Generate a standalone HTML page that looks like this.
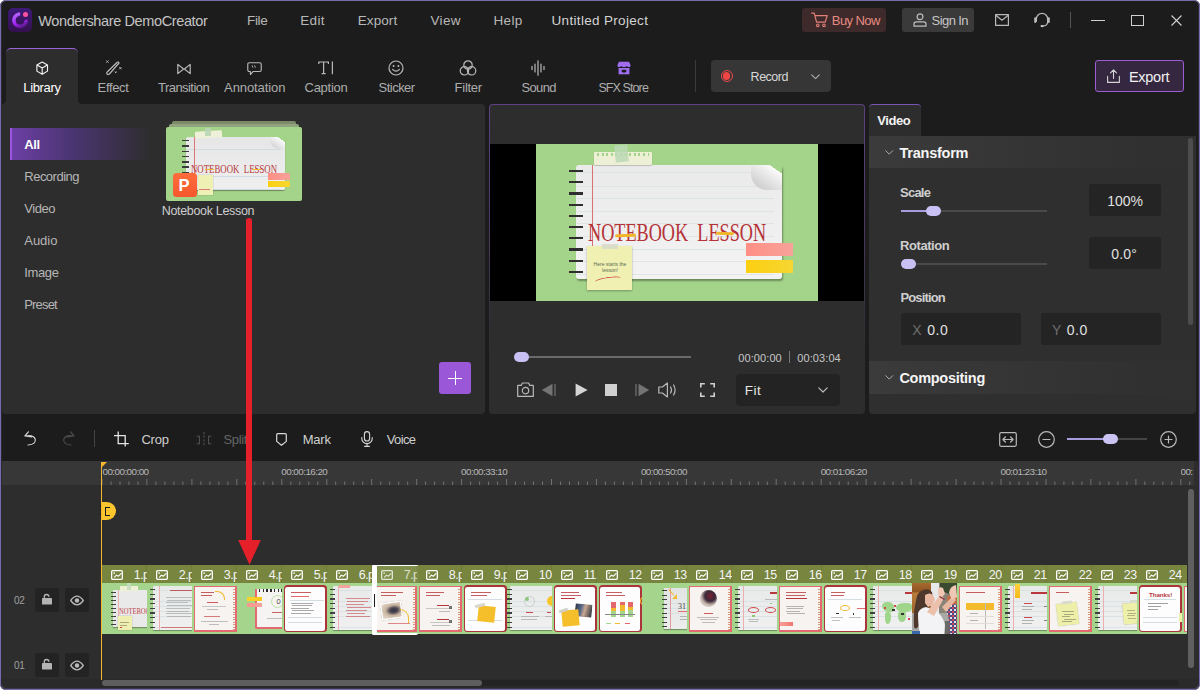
<!DOCTYPE html>
<html lang="en"><head><meta charset="utf-8"><title>Wondershare DemoCreator</title>
<style>
html,body{margin:0;padding:0}
body{width:1200px;height:690px;overflow:hidden;background:#fff;font-family:"Liberation Sans",sans-serif;color:#cfcfcf;font-size:13px;position:relative}
#win{position:absolute;left:0;top:0;width:1200px;height:690px;background:#1c1c1c;border-radius:6px;overflow:hidden}
#frame{position:absolute;left:0;top:0;width:1200px;height:690px;border:1px solid #776ba8;border-radius:6px;box-sizing:border-box;pointer-events:none;z-index:50;box-shadow:inset 0 -0.5px 0 0.5px rgba(119,107,168,.35)}
.a{position:absolute}
.t{position:absolute;white-space:nowrap;line-height:1}
.panel{position:absolute;background:#2d2d2d}
svg{position:absolute;overflow:visible}
.menu{color:#b8b8b8;font-size:13.5px}
.tl{color:#adadad;font-size:13px}
.ic{stroke:#b9b9b9;fill:none;stroke-width:1.2;stroke-linecap:round;stroke-linejoin:round}
.nav{position:absolute;left:25px;color:#b6b6b6;font-size:13px;line-height:14px}
.box{position:absolute;background:#242424;border-radius:3px}
.lab{position:absolute;color:#cecece;font-size:13px;font-weight:bold;line-height:14px}
</style></head>
<body>
<div id="win">
<!-- title bar -->
<svg class="a" style="left:8px;top:8px" width="24" height="24" viewBox="0 0 24 24">
<defs><linearGradient id="lg1" x1="0" y1="0" x2="0" y2="1"><stop offset="0" stop-color="#3d1a78"/><stop offset="1" stop-color="#34104f"/></linearGradient>
<linearGradient id="lg2" x1="0.3" y1="0" x2="0.8" y2="1"><stop offset="0" stop-color="#b45cff"/><stop offset="0.6" stop-color="#a020f0"/><stop offset="1" stop-color="#5a1a8a"/></linearGradient></defs>
<rect x="0" y="0" width="24" height="24" rx="5" fill="url(#lg1)"/>
<path d="M10.6 6.2 A6.2 6.2 0 1 0 18.2 13.2" fill="none" stroke="url(#lg2)" stroke-width="3.6" stroke-linecap="round"/>
<circle cx="17.5" cy="6.6" r="2.5" fill="#ff4fa0"/>
</svg>
<div class="t" id="ttl" style="left:38.28px;letter-spacing:-0.38px;top:14px;font-size:14.5px;color:#c4c4c4">Wondershare DemoCreator</div>
<div class="t menu" id="m1" style="left:247.06px;letter-spacing:-0.38px;top:14px">File</div>
<div class="t menu" id="m2" style="left:300.31px;letter-spacing:0.29px;top:14px">Edit</div>
<div class="t menu" id="m3" style="left:357.81px;letter-spacing:0.07px;top:14px">Export</div>
<div class="t menu" id="m4" style="left:430.56px;letter-spacing:0.29px;top:14px">View</div>
<div class="t menu" id="m5" style="left:493.56px;letter-spacing:0.29px;top:14px">Help</div>
<div class="t menu" id="m6" style="left:551.55px;letter-spacing:0.32px;top:14px;color:#d4d4d4">Untitled Project</div>
<div class="a" style="left:802px;top:8px;width:84px;height:24px;background:#3e2a2a;border-radius:3px"></div>
<svg style="left:811px;top:12px" width="18" height="16" viewBox="0 0 18 16"><path d="M0.7 1.2 H3.2 L5.6 10.2 H14.2 L16.2 3.6 H4" fill="none" stroke="#e27f78" stroke-width="1.2" stroke-linecap="round" stroke-linejoin="round"/><circle cx="6.8" cy="13.3" r="1.3" fill="none" stroke="#e27f78" stroke-width="1.1"/><circle cx="13" cy="13.3" r="1.3" fill="none" stroke="#e27f78" stroke-width="1.1"/></svg>
<div class="t" id="buy" style="left:831.79px;letter-spacing:-0.57px;top:14px;font-size:13px;color:#e58a82">Buy Now</div>
<div class="a" style="left:902px;top:8px;width:72px;height:24px;background:#3a3a3a;border-radius:3px"></div>
<svg style="left:913px;top:13px" width="14" height="14" viewBox="0 0 14 14"><circle cx="7" cy="3.8" r="2.9" class="ic" style="stroke:#bdbdbd"/><path d="M1 13.2 V11 Q1 8.8 3.2 8.8 H10.8 Q13 8.8 13 11 V13.2 Z" class="ic" style="stroke:#bdbdbd"/></svg>
<div class="t" id="sign" style="left:931.59px;letter-spacing:-0.58px;top:14px;font-size:13px;color:#c6c6c6">Sign In</div>
<svg style="left:995px;top:14px" width="14" height="12" viewBox="0 0 14 12"><rect x="0.6" y="0.6" width="12.8" height="10.8" class="ic"/><path d="M0.8 1.2 L7 6.2 L13.2 1.2" class="ic"/></svg>
<svg style="left:1033px;top:11px" width="18" height="18" viewBox="0 0 18 18"><path d="M3.4 10.5 V8 A5.6 5.6 0 0 1 14.6 8 V10.5" class="ic"/><path d="M2.2 7.2 V11" class="ic" style="stroke-width:2"/><path d="M15.8 7.2 V11" class="ic" style="stroke-width:2"/><path d="M14.6 11 Q14.4 14.6 10.6 15" class="ic"/><ellipse cx="9.2" cy="15.1" rx="1.8" ry="1.1" fill="#c8c8c8"/></svg>
<div class="a" style="left:1070px;top:12px;width:1px;height:16px;background:#555"></div>
<div class="a" style="left:1091px;top:20px;width:14px;height:1px;background:#d0d0d0"></div>
<div class="a" style="left:1131px;top:15px;width:11px;height:9px;border:1px solid #d0d0d0"></div>
<svg style="left:1171px;top:15px" width="11" height="11" viewBox="0 0 11 11"><path d="M0.5 0.5 L10.5 10.5 M10.5 0.5 L0.5 10.5" stroke="#d0d0d0" stroke-width="1.1" fill="none"/></svg>
<!-- toolbar -->
<div class="a" style="left:6px;top:48px;width:72px;height:57px;background:#2d2d2d;border-radius:5px 5px 0 0;border-top:1px solid #9a63d8;box-sizing:border-box"></div>
<div class="a" style="left:2px;top:100px;width:4px;height:4px;background:radial-gradient(circle at 0 0,rgba(45,45,45,0) 3.6px,#2d2d2d 4.2px)"></div>
<div class="a" style="left:78px;top:100px;width:4px;height:4px;background:radial-gradient(circle at 100% 0,rgba(45,45,45,0) 3.6px,#2d2d2d 4.2px)"></div>
<div class="t tl" id="tb1" style="left:23.34px;letter-spacing:-0.36px;top:81px;color:#fff">Library</div>
<div class="t tl" id="tb2" style="left:97.59px;letter-spacing:-0.34px;top:81px;">Effect</div>
<div class="t tl" id="tb3" style="left:158.09px;letter-spacing:-0.56px;top:81px;">Transition</div>
<div class="t tl" id="tb4" style="left:224.09px;letter-spacing:-0.09px;top:81px;">Annotation</div>
<div class="t tl" id="tb5" style="left:304.59px;letter-spacing:-0.29px;top:81px;">Caption</div>
<div class="t tl" id="tb6" style="left:378.59px;letter-spacing:-0.53px;top:81px;">Sticker</div>
<div class="t tl" id="tb7" style="left:454.59px;letter-spacing:-0.26px;top:81px;">Filter</div>
<div class="t tl" id="tb8" style="left:521.59px;letter-spacing:-0.69px;top:81px;">Sound</div>
<div class="t tl" id="tb9" style="left:598.38px;letter-spacing:-0.90px;top:81.5px;font-size:12.5px;">SFX Store</div>
<svg style="left:35.8px;top:60.5px" width="12.4" height="14.6" viewBox="0 0 14 16"><path d="M7 1 L13 4.3 V11.2 L7 14.8 L1 11.2 V4.3 Z M1.2 4.4 L7 7.6 L12.8 4.4 M7 7.6 V14.6" class="ic" style="stroke:#f2f2f2;stroke-width:1.3"/></svg>
<svg style="left:105px;top:60px" width="18" height="16" viewBox="0 0 18 16"><path d="M12.2 2.2 Q13.6 1.6 14 3 L4.4 14 Q3 15 2 14 Q1.2 12.8 2.4 11.8 Z" class="ic"/><path d="M1.6 0.8 l1.6 1.6 m0 -1.6 l-1.6 1.6 M14.6 7.4 l1.6 1.6 m0 -1.6 l-1.6 1.6 M10.2 11.8 l1 1 m0 -1 l-1 1" class="ic" style="stroke-width:1"/></svg>
<svg style="left:177.2px;top:62.5px" width="14" height="12" viewBox="0 0 14 12"><path d="M0.8 1.4 L6.6 6 L0.8 10.6 Z M13.2 1.4 L7.4 6 L13.2 10.6 Z" class="ic"/></svg>
<svg style="left:247.3px;top:61.8px" width="15" height="14" viewBox="0 0 16 15"><path d="M2.4 0.8 H13.6 Q15.2 0.8 15.2 2.4 V8.6 Q15.2 10.2 13.6 10.2 H6.4 L3.6 13.4 V10.2 H2.4 Q0.8 10.2 0.8 8.6 V2.4 Q0.8 0.8 2.4 0.8 Z" class="ic"/><path d="M5.6 4 l0.6 1.6 M8.2 4 l0.6 1.6" class="ic" style="stroke-width:1"/></svg>
<svg style="left:318px;top:61px" width="16" height="14" viewBox="0 0 16 14"><path d="M0.8 3 V1 H10.4 V3 M5.6 1 V12.6 M3.6 12.6 H7.6 M14.4 0.6 V13.2" class="ic" style="stroke-linecap:butt;stroke-linejoin:miter"/></svg>
<svg style="left:388px;top:60px" width="16" height="16" viewBox="0 0 16 16"><circle cx="8" cy="8" r="7" class="ic"/><path d="M4.6 9.4 Q8 13 11.4 9.4" class="ic"/><circle cx="5.6" cy="6" r="0.9" fill="#c8c8c8"/><circle cx="10.4" cy="6" r="0.9" fill="#c8c8c8"/></svg>
<svg style="left:459px;top:60px" width="18" height="16" viewBox="0 0 18 16"><circle cx="9" cy="5" r="4.2" class="ic"/><circle cx="5.4" cy="10.8" r="4.2" class="ic"/><circle cx="12.6" cy="10.8" r="4.2" class="ic"/></svg>
<svg style="left:531px;top:60px" width="14" height="16" viewBox="0 0 14 16"><path d="M1 6.4 V9.6 M4 4 V12 M7 0.8 V15.2 M10 4 V12 M13 6.4 V9.6" class="ic"/></svg>
<svg style="left:616.6px;top:61px" width="14" height="14" viewBox="0 0 16 16"><path d="M2.2 0.8 H13.8 L15.6 5 Q15.4 7 13.4 7 Q12 7 11.4 5.8 Q10.6 7 8 7 Q5.4 7 4.6 5.8 Q4 7 2.6 7 Q0.6 7 0.4 5 Z" fill="#a06cf0"/><path d="M1.8 8 H14.2 V15.2 H1.8 Z" fill="#a06cf0"/><rect x="5.2" y="10" width="5.6" height="3" rx="1.5" fill="#1c1c1c"/></svg>
<div class="a" style="left:695px;top:60px;width:1px;height:32px;background:#3c3c3c"></div>
<div class="a" style="left:711px;top:60px;width:120px;height:32px;background:#363636;border-radius:4px"></div>
<div class="a" style="left:720.7px;top:70.2px;width:12px;height:12px;border-radius:50%;border:1.1px solid #f04a4a;box-sizing:border-box"></div><div class="a" style="left:722.9px;top:72.4px;width:7.6px;height:7.6px;border-radius:50%;background:#f04444"></div>
<div class="t" id="rec" style="left:750.62px;letter-spacing:-0.51px;top:71px;font-size:12.5px;color:#d8d8d8">Record</div>
<svg style="left:810.5px;top:73.5px" width="9" height="5.5" viewBox="0 0 10 6"><path d="M0.8 0.8 L5 5 L9.2 0.8" class="ic" style="stroke:#b0b0b0"/></svg>
<div class="a" style="left:1095px;top:60px;width:89px;height:32px;background:#35273f;border:1px solid #9b5cd4;border-radius:3px;box-sizing:border-box"></div>
<svg style="left:1107px;top:69px" width="13" height="14" viewBox="0 0 13 14"><path d="M6.5 9.4 V1 M3.5 3.8 L6.5 0.8 L9.5 3.8 M0.6 7.4 V13.4 H12.4 V7.4" class="ic" style="stroke:#d4d4d4;stroke-width:1.1"/></svg>
<div class="t" id="exp" style="left:1128.98px;letter-spacing:-0.28px;top:70px;font-size:14.5px;color:#f0f0f0">Export</div>
<!-- library panel -->
<div class="panel" style="left:2px;top:104px;width:483px;height:310px;border-radius:0 4px 4px 4px"></div>
<div class="a" style="left:10px;top:128px;width:142px;height:32px;background:linear-gradient(90deg,#6d3fa6 0%,#4a3570 45%,rgba(45,45,45,0) 100%)"></div>
<div class="a" style="left:10px;top:128px;width:2px;height:32px;background:#9a55e0"></div>
<div class="nav" id="n0" style="left:24.29px;letter-spacing:-0.45px;top:138px;color:#fff;font-weight:bold">All</div>
<div class="nav" id="n1" style="left:24.29px;letter-spacing:-0.51px;top:170px">Recording</div>
<div class="nav" id="n2" style="left:24.29px;letter-spacing:-0.47px;top:202px">Video</div>
<div class="nav" id="n3" style="left:24.29px;letter-spacing:-0.03px;top:234px">Audio</div>
<div class="nav" id="n4" style="left:24.29px;letter-spacing:-0.38px;top:266px">Image</div>
<div class="nav" id="n5" style="left:24.29px;letter-spacing:-0.83px;top:298px">Preset</div>
<div class="a" style="left:172px;top:121px;width:124px;height:5px;background:#7d8b69;border-radius:2px 2px 0 0"></div>
<div class="a" style="left:169px;top:124px;width:130px;height:5px;background:#92a47d;border-radius:2px 2px 0 0"></div>
<div class="a" id="thumb" style="left:166px;top:127px;width:136px;height:74px;background:#a4d48a;border-radius:2px;overflow:hidden">
 <div class="a" style="left:19.5px;top:10px;width:99px;height:53px;background:linear-gradient(180deg,#e6e6e6,#efefef);border-radius:2px;box-shadow:0 1px 1px rgba(0,0,0,.35)"></div>
 <div class="a" style="left:19.5px;top:10px;width:95px;height:53px;background:repeating-linear-gradient(180deg,transparent 0,transparent 12.4px,#cfdce2 12.4px,#cfdce2 13.2px)"></div>
 <div class="a" style="left:27.5px;top:10px;width:1px;height:53px;background:#dc7478"></div>
 <div class="a" style="left:16px;top:12.5px;width:7px;height:48px;background:repeating-linear-gradient(180deg,#3a3a3a 0,#3a3a3a 1.4px,transparent 1.4px,transparent 5.3px)"></div>
 <div class="a" style="left:28.5px;top:3.5px;width:27px;height:6.5px;background:#eef0d8;border-radius:1px;transform:rotate(-3deg)"></div>
 <div class="a" style="left:39px;top:0.5px;width:5.5px;height:8.5px;background:#b9d6b4;opacity:.9"></div>
 <div class="a" style="left:104px;top:10px;width:15px;height:12px;background:linear-gradient(215deg,#a4d48a 0,#a4d48a 22%,#fbfbfb 23%,#c8c8c8 100%);border-radius:0 0 0 9px"></div>
 <div class="t" id="nbs" style="left:25.20px;transform:scaleX(0.7648);top:36.5px;font-family:'Liberation Serif',serif;font-size:11.5px;color:#b8383c;transform-origin:0 50%;">NOTEBOOK&nbsp; LESSON</div>
 <div class="a" style="left:39px;top:42px;width:9px;height:1.3px;background:#f2b62c;border-radius:1px"></div>
 <div class="a" style="left:86px;top:41.5px;width:9px;height:1.3px;background:#f2b62c;border-radius:1px"></div>
 <div class="a" style="left:31.5px;top:48px;width:15px;height:20px;background:#eef0b4;box-shadow:0 0 1px rgba(0,0,0,.35)"></div>
 <div class="a" style="left:33px;top:62px;width:11px;height:1px;background:#e0787a"></div>
 <div class="a" style="left:101.5px;top:46.3px;width:22px;height:6.4px;background:linear-gradient(90deg,#ff8f85,#f6a29a)"></div>
 <div class="a" style="left:101.5px;top:53.8px;width:22px;height:6.7px;background:linear-gradient(90deg,#fccf10,#f6d633)"></div>
 <div class="a" style="left:7px;top:46px;width:24px;height:24px;background:linear-gradient(180deg,#ff6d3c,#f4572c);border-radius:3.5px"></div>
 <div class="t" style="left:12.5px;top:50px;font-size:16.5px;font-weight:bold;color:#fff">P</div>
</div>
<div class="t" id="nbl" style="left:161.72px;letter-spacing:-0.32px;top:205px;font-size:12.5px;color:#cdcdcd">Notebook Lesson</div>
<div class="a" style="left:439px;top:362px;width:32px;height:32px;background:#9a58d8;border-radius:3px"></div>
<div class="a" style="left:448px;top:378px;width:14px;height:1px;background:#fff"></div>
<div class="a" style="left:455px;top:371px;width:1px;height:14px;background:#fff"></div>
<!-- preview panel -->
<div class="a" style="left:489px;top:104px;width:376px;height:310px;border-radius:4px;background:linear-gradient(180deg,#5e4182 0%,#4c3a66 35%,#2d2d2d 80%)"></div>
<div class="panel" style="left:490px;top:105px;width:374px;height:309px;border-radius:3px 3px 4px 4px"></div>
<div class="a" style="left:490px;top:144px;width:373.5px;height:157px;background:#000"></div>
<div class="a" id="slide" style="left:536px;top:144px;width:282px;height:157px;background:#a4d48a;overflow:hidden">
 <div class="a" style="left:40px;top:21px;width:206px;height:114px;background:linear-gradient(180deg,#eaeaea,#f3f3f3);border-radius:3px;box-shadow:1px 2px 2px rgba(0,0,0,.35)"></div>
 <div class="a" style="left:40px;top:21px;width:198px;height:114px;background:repeating-linear-gradient(180deg,transparent 0,transparent 11.6px,#d2dde0 11.6px,#d2dde0 12.6px);background-position:0 9px;opacity:.6"></div>
 <div class="a" style="left:56px;top:21px;width:1px;height:114px;background:#dc6f74"></div>
 <div class="a" style="left:33px;top:26px;width:14px;height:106px;background:repeating-linear-gradient(180deg,#2e2e2e 0,#2e2e2e 2.2px,transparent 2.2px,transparent 11.2px)"></div>
 <div class="a" style="left:58px;top:8px;width:58px;height:13px;background:#eef0d6;border-radius:1px;box-shadow:0 1px 1px rgba(0,0,0,.2)"></div>
 <div class="a" style="left:61px;top:9px;width:52px;height:3px;background:repeating-linear-gradient(90deg,#a4d48a 0,#a4d48a 2px,transparent 2px,transparent 4.6px)"></div>
 <div class="a" style="left:79px;top:1px;width:13px;height:17px;background:#bcd8b4;opacity:.85;transform:rotate(-6deg)"></div>
 <div class="a" style="left:215px;top:21px;width:31px;height:25px;background:linear-gradient(215deg,#a4d48a 0,#a4d48a 18%,#fafafa 19%,#c9c9c9 90%);border-radius:0 0 0 16px"></div>
 <div class="t" id="nbk" style="left:51.50px;transform:scaleX(0.7005);top:75.6px;font-family:'Liberation Serif',serif;font-size:26px;color:#b53338;transform-origin:0 50%;">NOTEBOOK&nbsp; LESSON</div>
 <div class="a" style="left:78.5px;top:89.5px;width:21px;height:2.6px;background:#f2b62c;border-radius:2px;transform:rotate(-2deg)"></div>
 <div class="a" style="left:180px;top:88px;width:18px;height:2.6px;background:#f2b62c;border-radius:2px;transform:rotate(2deg)"></div>
 <div class="a" style="left:51px;top:102px;width:45px;height:44px;background:#eff0b2;box-shadow:0 1px 2px rgba(0,0,0,.3)"></div>
 <div class="a" style="left:66px;top:100px;width:16px;height:5px;background:#d8dcc8;opacity:.9"></div>
 <div class="t" style="left:57px;top:118px;font-size:5px;line-height:5.5px;color:#5c6a55;white-space:normal;width:34px;text-align:center">Here starts the lesson!</div>
 <div class="a" style="left:59px;top:133px;width:26px;height:5px;border-top:1px solid #d0494c;border-radius:50%;transform:rotate(-8deg)"></div>
 <div class="a" style="left:210px;top:99px;width:47px;height:13px;background:linear-gradient(90deg,#ff8f85,#f7a29a)"></div>
 <div class="a" style="left:210px;top:116px;width:47px;height:13px;background:linear-gradient(90deg,#fccf10,#f6d633)"></div>
</div>
<div class="a" style="left:520px;top:356px;width:171px;height:2px;background:#6a6a6a"></div>
<div class="a" style="left:514px;top:352px;width:15px;height:10px;background:#c9c1f3;border-radius:5px"></div>
<div class="t" id="tm1" style="left:738.23px;letter-spacing:0.10px;top:353px;font-size:11px;color:#c8c8c8">00:00:00</div>
<div class="a" style="left:789px;top:351px;width:1px;height:12px;background:#777"></div>
<div class="t" id="tm2" style="left:797.23px;letter-spacing:0.10px;top:353px;font-size:11px;color:#c8c8c8">00:03:04</div>
<svg style="left:517px;top:382px" width="17" height="15" viewBox="0 0 17 15"><path d="M0.7 3.4 H4.2 L5.4 1 H11.6 L12.8 3.4 H16.3 V14.3 H0.7 Z" class="ic"/><circle cx="8.5" cy="8.6" r="3.2" class="ic"/></svg>
<svg style="left:541px;top:383px" width="15" height="14" viewBox="0 0 15 14"><path d="M11.5 0.8 V13.2 L0.8 7 Z" fill="#747474"/><path d="M14 1 V13" stroke="#747474" stroke-width="1.2"/></svg>
<svg style="left:575px;top:383px" width="13" height="14" viewBox="0 0 13 14"><path d="M0.6 0.4 L12.6 7 L0.6 13.6 Z" fill="#d4d4d4"/></svg>
<div class="a" style="left:605px;top:384px;width:12px;height:12px;background:#d0d0d0"></div>
<svg style="left:635px;top:383px" width="15" height="14" viewBox="0 0 15 14"><path d="M3.5 0.8 V13.2 L14.2 7 Z" fill="#747474"/><path d="M1 1 V13" stroke="#747474" stroke-width="1.2"/></svg>
<svg style="left:658px;top:382px" width="20" height="16" viewBox="0 0 20 16"><path d="M0.8 5 H4.4 L9.4 1 V15 L4.4 11 H0.8 Z" class="ic"/><path d="M12.6 5 Q14.4 8 12.6 11 M15.6 3 Q18.6 8 15.6 13" class="ic"/></svg>
<svg style="left:700px;top:383px" width="15" height="14" viewBox="0 0 15 14"><path d="M0.8 4.4 V0.8 H4.8 M10.2 0.8 H14.2 V4.4 M14.2 9.6 V13.2 H10.2 M4.8 13.2 H0.8 V9.6" class="ic" style="stroke-width:1.6;stroke:#d0d0d0;stroke-linecap:butt;stroke-linejoin:miter"/></svg>
<div class="a" style="left:736px;top:374px;width:104px;height:32px;background:#232323;border-radius:4px"></div>
<div class="t" id="fit" style="left:744.65px;letter-spacing:0.50px;top:384px;font-size:13.5px;color:#e6e6e6">Fit</div>
<svg style="left:818px;top:387px" width="10" height="6" viewBox="0 0 10 6"><path d="M0.8 0.8 L5 5 L9.2 0.8" class="ic"/></svg>
<!-- properties panel -->
<div class="panel" style="left:869px;top:136px;width:327px;height:278px;border-radius:0 0 4px 4px;background:#2f2f2f"></div>
<div class="a" style="left:869px;top:104px;width:52px;height:33px;background:#2d2d2d;border-radius:4px 4px 0 0;border-top:1px solid #7a55b8;box-sizing:border-box"></div>
<div class="t" id="vid" style="left:877.19px;letter-spacing:-0.39px;top:114px;font-size:13px;font-weight:bold;color:#f2f2f2">Video</div>
<div class="a" style="left:869px;top:136px;width:327px;height:32px;background:linear-gradient(90deg,#3b3b3b 0%,#343434 50%,#2f2f2f 100%)"></div>
<div class="a" style="left:869px;top:361px;width:327px;height:33px;background:linear-gradient(90deg,#3b3b3b 0%,#343434 50%,#2f2f2f 100%)"></div>
<svg style="left:884.5px;top:149.5px" width="8.5" height="5" viewBox="0 0 10 6"><path d="M0.8 0.8 L5 5 L9.2 0.8" class="ic" style="stroke:#aaa"/></svg>
<div class="t" id="trf" style="left:899.49px;letter-spacing:-0.24px;top:146px;font-size:14.5px;font-weight:bold;color:#f4f4f4">Transform</div>
<div class="lab" id="sc" style="left:900.09px;letter-spacing:-0.79px;top:186px">Scale</div>
<div class="a" style="left:901px;top:210px;width:146px;height:2px;background:#4a4a4a"></div>
<div class="a" style="left:901px;top:210px;width:30px;height:2px;background:#a99be0"></div>
<div class="a" style="left:926px;top:206px;width:15px;height:10px;background:#c9c1f3;border-radius:5px"></div>
<div class="box" style="left:1089px;top:184px;width:72px;height:32px"></div>
<div class="t" id="v100" style="left:1107.22px;letter-spacing:-0.02px;top:194px;font-size:14px;color:#e0e0e0">100%</div>
<div class="lab" id="ro" style="left:900.09px;letter-spacing:-0.44px;top:239px">Rotation</div>
<div class="a" style="left:901px;top:263px;width:146px;height:2px;background:#4a4a4a"></div>
<div class="a" style="left:901px;top:259px;width:15px;height:10px;background:#c9c1f3;border-radius:5px"></div>
<div class="box" style="left:1089px;top:237px;width:72px;height:32px"></div>
<div class="t" id="v00" style="left:1111.32px;letter-spacing:0.13px;top:247px;font-size:14px;color:#e0e0e0">0.0°</div>
<div class="lab" id="po" style="left:900.39px;letter-spacing:-0.84px;top:291px">Position</div>
<div class="box" style="left:901px;top:313px;width:120px;height:32px"></div>
<div class="t" id="px" style="left:912.32px;letter-spacing:0.12px;top:323px;font-size:14px;color:#6e6e6e">X</div>
<div class="t" id="pxv" style="left:927.22px;letter-spacing:0.50px;top:323px;font-size:14px;color:#e0e0e0">0.0</div>
<div class="box" style="left:1041px;top:313px;width:120px;height:32px"></div>
<div class="t" id="py" style="left:1052.02px;letter-spacing:0.42px;top:323px;font-size:14px;color:#6e6e6e">Y</div>
<div class="t" id="pyv" style="left:1066.82px;letter-spacing:0.50px;top:323px;font-size:14px;color:#e0e0e0">0.0</div>
<svg style="left:884.5px;top:374.5px" width="8.5" height="5" viewBox="0 0 10 6"><path d="M0.8 0.8 L5 5 L9.2 0.8" class="ic" style="stroke:#aaa"/></svg>
<div class="t" id="cmp" style="left:899.38px;letter-spacing:-0.27px;top:371px;font-size:14.5px;font-weight:bold;color:#f4f4f4">Compositing</div>
<div class="a" style="left:1188px;top:138px;width:5px;height:187px;background:#4d4d4d;border-radius:3px"></div>
<!-- timeline toolbar -->
<svg style="left:24px;top:431px" width="13" height="15" viewBox="0 0 13 15"><path d="M4.4 0.8 L0.9 5 L7.6 6 M1.4 5.2 Q9 3.4 11.2 8 Q12.4 13.2 4 14" class="ic" style="stroke:#d0d0d0;stroke-width:1.2"/></svg>
<svg style="left:62px;top:431px" width="13" height="15" viewBox="0 0 13 15"><path d="M8.6 0.8 L12.1 5 L5.4 6 M11.6 5.2 Q4 3.4 1.8 8 Q0.6 13.2 9 14" class="ic" style="stroke:#4c4c4c;stroke-width:1.2"/></svg>
<div class="a" style="left:94px;top:430px;width:1px;height:17px;background:#444"></div>
<svg style="left:114px;top:431px" width="16" height="16" viewBox="0 0 16 16"><path d="M4.2 0.4 V12.6 H14.8 M0 4.6 H11.2 V15.6" class="ic" style="stroke:#e4e4e4;stroke-width:1.3;stroke-linecap:butt;stroke-linejoin:miter"/></svg>
<div class="t" id="crop" style="left:141.39px;letter-spacing:-0.22px;top:433px;font-size:13px;color:#d0d0d0">Crop</div>
<svg style="left:196px;top:432px" width="16" height="14" viewBox="0 0 16 14"><path d="M0.6 4.2 H3.4 V11.8 H0.6 M15.4 4.2 H12.6 V11.8 H15.4" class="ic" style="stroke:#525252;stroke-width:1.1;stroke-linecap:butt;stroke-linejoin:miter"/><path d="M8 0 V14" stroke="#525252" stroke-width="1.1" stroke-dasharray="2.2 1.4" fill="none"/></svg>
<div class="t" id="split" style="left:223.49px;letter-spacing:-0.37px;top:433px;font-size:13px;color:#666">Split</div>
<svg style="left:276.3px;top:433px" width="11" height="13" viewBox="0 0 11 13"><path d="M1.8 0.7 H9.2 Q10.3 0.7 10.3 1.8 V8.4 L5.5 12.3 L0.7 8.4 V1.8 Q0.7 0.7 1.8 0.7 Z" class="ic" style="stroke:#d8d8d8;stroke-width:1.2"/></svg>
<div class="t" id="mark" style="left:302.69px;letter-spacing:-0.22px;top:433px;font-size:13px;color:#d0d0d0">Mark</div>
<svg style="left:361px;top:431px" width="12" height="16" viewBox="0 0 12 16"><rect x="3.4" y="0.6" width="5.2" height="9.4" rx="2.6" class="ic" style="stroke:#d8d8d8;stroke-width:1.1"/><path d="M0.8 6.6 V7.4 A5.2 5.2 0 0 0 11.2 7.4 V6.6 M6 12.6 V15.2 M3.6 15.4 H8.4" class="ic" style="stroke:#d8d8d8;stroke-width:1.1"/></svg>
<div class="t" id="voice" style="left:386.69px;letter-spacing:-0.62px;top:433px;font-size:13px;color:#d0d0d0">Voice</div>
<svg style="left:999px;top:432px" width="18" height="15" viewBox="0 0 18 15"><rect x="0.7" y="0.7" width="16.6" height="13.6" rx="1.5" class="ic"/><path d="M4 7.5 H14 M6.4 5 L3.9 7.5 L6.4 10 M11.6 5 L14.1 7.5 L11.6 10" class="ic"/></svg>
<svg style="left:1038px;top:431px" width="17" height="17" viewBox="0 0 17 17"><circle cx="8.5" cy="8.5" r="7.8" class="ic"/><path d="M5 8.5 H12" class="ic"/></svg>
<div class="a" style="left:1067px;top:438px;width:80px;height:2px;background:#444"></div>
<div class="a" style="left:1067px;top:438px;width:40px;height:2px;background:#a99be0"></div>
<div class="a" style="left:1103px;top:434px;width:15px;height:10px;background:#cbc3f2;border-radius:5px"></div>
<svg style="left:1160px;top:431px" width="17" height="17" viewBox="0 0 17 17"><circle cx="8.5" cy="8.5" r="7.8" class="ic"/><path d="M5 8.5 H12 M8.5 5 V12" class="ic"/></svg>
<!-- timeline -->
<div class="a" style="left:2px;top:461px;width:1196px;height:227px;background:#2d2d2d"></div>
<div class="a" style="left:2px;top:461px;width:1192px;height:24px;background:#373737"></div>
<div class="a" style="left:2px;top:679px;width:1196px;height:9px;background:#2a2a2a"></div>
<div class="a" style="left:102px;top:680px;width:1077px;height:6px;background:#232323;border-radius:3px"></div>
<div class="a" style="left:102px;top:680px;width:380px;height:6px;background:#5e5e5e;border-radius:3px"></div>
<div class="a" style="left:1188px;top:489px;width:6px;height:179px;background:#606060;border-radius:3px"></div>
<svg style="left:2px;top:461px" width="1192" height="24" viewBox="0 0 1192 24"><path d="M100.0 18 V24 M109.0 20.5 V24 M118.0 20.5 V24 M127.0 20.5 V24 M136.0 20.5 V24 M144.9 18 V24 M153.9 20.5 V24 M162.9 20.5 V24 M171.9 20.5 V24 M180.9 20.5 V24 M189.9 18 V24 M198.9 20.5 V24 M207.9 20.5 V24 M216.9 20.5 V24 M225.9 20.5 V24 M234.8 18 V24 M243.8 20.5 V24 M252.8 20.5 V24 M261.8 20.5 V24 M270.8 20.5 V24 M279.8 18 V24 M288.8 20.5 V24 M297.8 20.5 V24 M306.8 20.5 V24 M315.8 20.5 V24 M324.8 18 V24 M333.7 20.5 V24 M342.7 20.5 V24 M351.7 20.5 V24 M360.7 20.5 V24 M369.7 18 V24 M378.7 20.5 V24 M387.7 20.5 V24 M396.7 20.5 V24 M405.7 20.5 V24 M414.7 18 V24 M423.6 20.5 V24 M432.6 20.5 V24 M441.6 20.5 V24 M450.6 20.5 V24 M459.6 18 V24 M468.6 20.5 V24 M477.6 20.5 V24 M486.6 20.5 V24 M495.6 20.5 V24 M504.6 18 V24 M513.5 20.5 V24 M522.5 20.5 V24 M531.5 20.5 V24 M540.5 20.5 V24 M549.5 18 V24 M558.5 20.5 V24 M567.5 20.5 V24 M576.5 20.5 V24 M585.5 20.5 V24 M594.5 18 V24 M603.4 20.5 V24 M612.4 20.5 V24 M621.4 20.5 V24 M630.4 20.5 V24 M639.4 18 V24 M648.4 20.5 V24 M657.4 20.5 V24 M666.4 20.5 V24 M675.4 20.5 V24 M684.4 18 V24 M693.3 20.5 V24 M702.3 20.5 V24 M711.3 20.5 V24 M720.3 20.5 V24 M729.3 18 V24 M738.3 20.5 V24 M747.3 20.5 V24 M756.3 20.5 V24 M765.3 20.5 V24 M774.2 18 V24 M783.2 20.5 V24 M792.2 20.5 V24 M801.2 20.5 V24 M810.2 20.5 V24 M819.2 18 V24 M828.2 20.5 V24 M837.2 20.5 V24 M846.2 20.5 V24 M855.2 20.5 V24 M864.1 18 V24 M873.1 20.5 V24 M882.1 20.5 V24 M891.1 20.5 V24 M900.1 20.5 V24 M909.1 18 V24 M918.1 20.5 V24 M927.1 20.5 V24 M936.1 20.5 V24 M945.1 20.5 V24 M954.1 18 V24 M963.0 20.5 V24 M972.0 20.5 V24 M981.0 20.5 V24 M990.0 20.5 V24 M999.0 18 V24 M1008.0 20.5 V24 M1017.0 20.5 V24 M1026.0 20.5 V24 M1035.0 20.5 V24 M1044.0 18 V24 M1052.9 20.5 V24 M1061.9 20.5 V24 M1070.9 20.5 V24 M1079.9 20.5 V24 M1088.9 18 V24 M1097.9 20.5 V24 M1106.9 20.5 V24 M1115.9 20.5 V24 M1124.9 20.5 V24 M1133.9 18 V24 M1142.8 20.5 V24 M1151.8 20.5 V24 M1160.8 20.5 V24 M1169.8 20.5 V24 M1178.8 18 V24 M1187.8 20.5 V24" stroke="#727272" stroke-width="1" fill="none"/></svg>
<div class="t rl" id="rl0" style="left:102.5px;top:467px;font-size:9.9px;color:#b8b8b8;letter-spacing:-0.56px">00:00:00:00</div>
<div class="t rl" id="rl1" style="left:281.3px;top:467px;font-size:9.9px;color:#b8b8b8;letter-spacing:-0.56px">00:00:16:20</div>
<div class="t rl" id="rl2" style="left:461.1px;top:467px;font-size:9.9px;color:#b8b8b8;letter-spacing:-0.56px">00:00:33:10</div>
<div class="t rl" id="rl3" style="left:640.9px;top:467px;font-size:9.9px;color:#b8b8b8;letter-spacing:-0.56px">00:00:50:00</div>
<div class="t rl" id="rl4" style="left:820.7px;top:467px;font-size:9.9px;color:#b8b8b8;letter-spacing:-0.56px">00:01:06:20</div>
<div class="t rl" id="rl5" style="left:1000.5px;top:467px;font-size:9.9px;color:#b8b8b8;letter-spacing:-0.56px">00:01:23:10</div>
<div class="t rl" id="rl6" style="left:1180.5px;top:467px;font-size:9.9px;color:#b8b8b8;letter-spacing:-0.56px;width:12px;overflow:hidden">00:</div>
<div class="t" style="left:14px;top:596px;font-size:10px;color:#a0a0a0;letter-spacing:-0.3px">02</div>
<div class="a" style="left:35px;top:588px;width:24px;height:24px;background:#232323;border-radius:3px"></div>
<div class="a" style="left:65px;top:588px;width:24px;height:24px;background:#232323;border-radius:3px"></div>
<svg style="left:42px;top:594.2px" width="10" height="10.6" viewBox="0 0 10 10.6"><rect x="0" y="4" width="10" height="6.6" rx="0.9" fill="#b4b4b4"/><path d="M2.3 4.2 V2.9 A2.3 2.3 0 0 1 6.9 2.7" fill="none" stroke="#b4b4b4" stroke-width="1.3"/></svg>
<svg style="left:70.2px;top:595px" width="14" height="11" viewBox="0 0 14 11"><path d="M0.7 5.5 Q7 -3.2 13.3 5.5 Q7 14.2 0.7 5.5 Z" class="ic" style="stroke-width:1.3"/><circle cx="7" cy="5.5" r="2.2" fill="#b9b9b9"/></svg>
<div class="t" style="left:14px;top:661px;font-size:10px;color:#a0a0a0;letter-spacing:-0.3px">01</div>
<div class="a" style="left:35px;top:653px;width:24px;height:24px;background:#232323;border-radius:3px"></div>
<div class="a" style="left:65px;top:653px;width:24px;height:24px;background:#232323;border-radius:3px"></div>
<svg style="left:42px;top:659.2px" width="10" height="10.6" viewBox="0 0 10 10.6"><rect x="0" y="4" width="10" height="6.6" rx="0.9" fill="#b4b4b4"/><path d="M2.3 4.2 V2.9 A2.3 2.3 0 0 1 6.9 2.7" fill="none" stroke="#b4b4b4" stroke-width="1.3"/></svg>
<svg style="left:70.2px;top:660px" width="14" height="11" viewBox="0 0 14 11"><path d="M0.7 5.5 Q7 -3.2 13.3 5.5 Q7 14.2 0.7 5.5 Z" class="ic" style="stroke-width:1.3"/><circle cx="7" cy="5.5" r="2.2" fill="#b9b9b9"/></svg>
<div class="a" style="left:101px;top:502px;width:15px;height:18px;background:#fbc62d;border-radius:0 9px 9px 0"></div>
<div class="a" style="left:105px;top:507px;width:4px;height:7px;border:1.3px solid #1c1c1c;border-right:none"></div>
<div class="a" style="left:100px;top:505px;width:1.5px;height:12px;background:repeating-linear-gradient(180deg,#1c1c1c 0,#1c1c1c 2px,transparent 2px,transparent 4px)"></div>
<div class="a" id="strip" style="left:102.1px;top:565px;width:1084.5px;height:69px;background:#a5d58c;overflow:hidden">
<div class="a" style="left:0;top:0;width:1085px;height:18px;background:#78853f"></div>
<div class="a clip" style="left:0px;top:0;width:45px;height:69px;overflow:hidden"><div class="a" style="left:0;top:0;width:45px;height:18px;overflow:hidden;box-shadow:inset -1px 0 0 rgba(60,70,20,.15)"><svg style="left:9px;top:5px" width="12" height="10" viewBox="0 0 12 10"><rect x="0.65" y="0.65" width="10.7" height="8.7" rx="1.1" fill="none" stroke="#fff" stroke-width="1.3"/><circle cx="3.1" cy="3.1" r="0.85" fill="#fff"/><path d="M3.6 7.2 L5.4 5.2 L7.4 6.2 L10 3.6" fill="none" stroke="#fff" stroke-width="1.15" stroke-linecap="round" stroke-linejoin="round"/></svg><div class="t cn" style="left:31.6px;top:3.5px;font-size:12.5px;letter-spacing:-0.5px;color:#f4f4f4">1.png</div></div><div class="a" style="left:0;top:18px;width:45px;height:51px;overflow:hidden"><div class="a" style="left:11px;top:7px;width:33.5px;height:37px;background:#e9e9e9;box-shadow:0 1px 1px rgba(0,0,0,.3)"></div><div class="a" style="left:16px;top:7px;width:0.7px;height:37px;background:#eab0b0"></div><div class="a" style="left:9.0px;top:9.0px;width:5px;height:33.5px;background:repeating-linear-gradient(180deg,#404040 0,#404040 1.15px,transparent 1.15px,transparent 4.00px)"></div><div class="a" style="left:17.5px;top:3px;width:18px;height:4.5px;background:#eef0d6"></div><div class="a" style="left:25px;top:0px;width:4px;height:7px;background:#c5dcc0;opacity:.9"></div><div class="t" style="left:16.5px;top:24.6px;font-family:'Liberation Serif',serif;font-size:7.6px;color:#c0474b;transform-origin:0 50%;transform:scaleX(.86)">NOTEBOOK</div><div class="a" style="left:15.5px;top:33px;width:14px;height:14px;background:#eeefb0;box-shadow:0 0 1px rgba(0,0,0,.4)"></div><div class="a" style="left:18.0px;top:39.0px;width:9.0px;height:0.8px;background:#a9a97c;opacity:1"></div><div class="a" style="left:18.0px;top:41.5px;width:7.0px;height:0.8px;background:#a9a97c;opacity:1"></div><div class="a" style="left:18.0px;top:44.0px;width:1.5px;height:1.2px;background:#d0494c;opacity:1"></div></div></div>
<div class="a clip" style="left:45px;top:0;width:45px;height:69px;overflow:hidden"><div class="a" style="left:0;top:0;width:45px;height:18px;overflow:hidden;box-shadow:inset -1px 0 0 rgba(60,70,20,.15)"><svg style="left:9px;top:5px" width="12" height="10" viewBox="0 0 12 10"><rect x="0.65" y="0.65" width="10.7" height="8.7" rx="1.1" fill="none" stroke="#fff" stroke-width="1.3"/><circle cx="3.1" cy="3.1" r="0.85" fill="#fff"/><path d="M3.6 7.2 L5.4 5.2 L7.4 6.2 L10 3.6" fill="none" stroke="#fff" stroke-width="1.15" stroke-linecap="round" stroke-linejoin="round"/></svg><div class="t cn" style="left:31.6px;top:3.5px;font-size:12.5px;letter-spacing:-0.5px;color:#f4f4f4">2.png</div></div><div class="a" style="left:0;top:18px;width:45px;height:51px;overflow:hidden"><div class="a" style="left:5.5px;top:3px;width:60px;height:44px;background:linear-gradient(180deg,#e8e9e9,#f0f0f0);border-radius:1px;box-shadow:0 1px 1px rgba(0,0,0,.35)"></div><div class="a" style="left:5.5px;top:3px;width:60px;height:44px;background:repeating-linear-gradient(180deg,transparent 0,transparent 4.5px,#d3dde2 4.5px,#d3dde2 5.2px);opacity:.7"></div><div class="a" style="left:12.0px;top:3px;width:0.8px;height:44px;background:#ecaeb0"></div><div class="a" style="left:3.0px;top:5.5px;width:5px;height:39.0px;background:repeating-linear-gradient(180deg,#404040 0,#404040 1.15px,transparent 1.15px,transparent 4.69px)"></div><div class="a" style="left:23.0px;top:6.5px;width:22.0px;height:1.4px;background:#b8373c;opacity:0.8"></div><div class="a" style="left:19.0px;top:14.0px;width:26.0px;height:0.9px;background:#8c8c8c;opacity:0.5"></div><div class="a" style="left:20.0px;top:16.7px;width:24.0px;height:0.9px;background:#8c8c8c;opacity:0.5"></div><div class="a" style="left:19.0px;top:19.4px;width:22.0px;height:0.9px;background:#8c8c8c;opacity:0.5"></div><div class="a" style="left:20.0px;top:22.1px;width:26.0px;height:0.9px;background:#8c8c8c;opacity:0.5"></div><div class="a" style="left:19.0px;top:24.8px;width:24.0px;height:0.9px;background:#8c8c8c;opacity:0.5"></div><div class="a" style="left:20.0px;top:27.5px;width:22.0px;height:0.9px;background:#8c8c8c;opacity:0.5"></div><div class="a" style="left:19.0px;top:30.2px;width:26.0px;height:0.9px;background:#8c8c8c;opacity:0.5"></div><div class="a" style="left:20.0px;top:32.9px;width:24.0px;height:0.9px;background:#8c8c8c;opacity:0.5"></div><div class="a" style="left:14.0px;top:43.5px;width:31.0px;height:1.0px;background:#cf5a5e;opacity:0.8"></div></div></div>
<div class="a clip" style="left:90px;top:0;width:45px;height:69px;overflow:hidden"><div class="a" style="left:0;top:0;width:45px;height:18px;overflow:hidden;box-shadow:inset -1px 0 0 rgba(60,70,20,.15)"><svg style="left:9px;top:5px" width="12" height="10" viewBox="0 0 12 10"><rect x="0.65" y="0.65" width="10.7" height="8.7" rx="1.1" fill="none" stroke="#fff" stroke-width="1.3"/><circle cx="3.1" cy="3.1" r="0.85" fill="#fff"/><path d="M3.6 7.2 L5.4 5.2 L7.4 6.2 L10 3.6" fill="none" stroke="#fff" stroke-width="1.15" stroke-linecap="round" stroke-linejoin="round"/></svg><div class="t cn" style="left:31.6px;top:3.5px;font-size:12.5px;letter-spacing:-0.5px;color:#f4f4f4">3.png</div></div><div class="a" style="left:0;top:18px;width:45px;height:51px;overflow:hidden"><div class="a" style="left:1.5px;top:2.5px;width:43px;height:46.5px;background:#e26a70"></div><div class="a" style="left:3.1px;top:4.1px;width:39.8px;height:43.3px;background:#f6f3f1"></div><div class="a" style="left:41px;top:5.5px;width:1.6px;height:41px;background:repeating-linear-gradient(180deg,#d89a78 0,#d89a78 1.3px,transparent 1.3px,transparent 2.5px)"></div><div class="a" style="left:9.0px;top:8.5px;width:13.0px;height:1.4px;background:#b8373c;opacity:0.8"></div><div class="a" style="left:9.0px;top:11.5px;width:11.0px;height:1.4px;background:#b8373c;opacity:0.8"></div><div class="a" style="left:23px;top:8px;width:9px;height:8px;border:1.3px solid #f2b92c;border-left:none;border-bottom:none;border-radius:0 8px 0 0"></div><div class="a" style="left:15.0px;top:18.5px;width:11.0px;height:0.9px;background:#cf5a5e;opacity:1"></div><div class="a" style="left:10.0px;top:22.5px;width:24.0px;height:0.8px;background:#999;opacity:0.5"></div><div class="a" style="left:15.0px;top:25.5px;width:11.0px;height:0.8px;background:#999;opacity:0.6"></div><div class="a" style="left:12.0px;top:33.0px;width:16.0px;height:0.9px;background:#cf5a5e;opacity:0.8"></div><div class="a" style="left:9.0px;top:38.0px;width:27.0px;height:0.8px;background:#999;opacity:0.6"></div><div class="a" style="left:17.0px;top:40.5px;width:10.0px;height:0.8px;background:#999;opacity:0.6"></div></div></div>
<div class="a clip" style="left:135px;top:0;width:45px;height:69px;overflow:hidden"><div class="a" style="left:0;top:0;width:45px;height:18px;overflow:hidden;box-shadow:inset -1px 0 0 rgba(60,70,20,.15)"><svg style="left:9px;top:5px" width="12" height="10" viewBox="0 0 12 10"><rect x="0.65" y="0.65" width="10.7" height="8.7" rx="1.1" fill="none" stroke="#fff" stroke-width="1.3"/><circle cx="3.1" cy="3.1" r="0.85" fill="#fff"/><path d="M3.6 7.2 L5.4 5.2 L7.4 6.2 L10 3.6" fill="none" stroke="#fff" stroke-width="1.15" stroke-linecap="round" stroke-linejoin="round"/></svg><div class="t cn" style="left:31.6px;top:3.5px;font-size:12.5px;letter-spacing:-0.5px;color:#f4f4f4">4.png</div></div><div class="a" style="left:0;top:18px;width:45px;height:51px;overflow:hidden"><div class="a" style="left:18px;top:6px;width:40px;height:40px;background:#f6f4f2;border:2px solid #e26a70;border-right:none;border-top:none;border-radius:0 0 0 2px;box-sizing:border-box"></div><div class="a" style="left:22px;top:5.5px;width:24px;height:3.4px;background:repeating-linear-gradient(90deg,#2c2c2c 0,#2c2c2c 1.4px,transparent 1.4px,transparent 3.7px)"></div><div class="a" style="left:10px;top:14.2px;width:14.6px;height:3.8px;background:linear-gradient(90deg,#fad22c,#f6c81e)"></div><div class="a" style="left:10px;top:20.3px;width:14.6px;height:3.8px;background:linear-gradient(90deg,#f8958c,#f4a49c)"></div><div class="a" style="left:34px;top:11.5px;width:13px;height:13px;border:1.4px solid #bfe0ac;border-radius:50%;box-sizing:border-box"></div><div class="t" style="left:39.5px;top:14.5px;font-size:7.5px;color:#444">0</div><div class="a" style="left:35.0px;top:28.5px;width:10.0px;height:1.5px;background:#c0474b;opacity:0.85"></div><div class="a" style="left:30.0px;top:34.8px;width:15.0px;height:0.8px;background:#999;opacity:0.6"></div></div></div>
<div class="a clip" style="left:180px;top:0;width:45px;height:69px;overflow:hidden"><div class="a" style="left:0;top:0;width:45px;height:18px;overflow:hidden;box-shadow:inset -1px 0 0 rgba(60,70,20,.15)"><svg style="left:9px;top:5px" width="12" height="10" viewBox="0 0 12 10"><rect x="0.65" y="0.65" width="10.7" height="8.7" rx="1.1" fill="none" stroke="#fff" stroke-width="1.3"/><circle cx="3.1" cy="3.1" r="0.85" fill="#fff"/><path d="M3.6 7.2 L5.4 5.2 L7.4 6.2 L10 3.6" fill="none" stroke="#fff" stroke-width="1.15" stroke-linecap="round" stroke-linejoin="round"/></svg><div class="t cn" style="left:31.6px;top:3.5px;font-size:12.5px;letter-spacing:-0.5px;color:#f4f4f4">5.png</div></div><div class="a" style="left:0;top:18px;width:45px;height:51px;overflow:hidden"><div class="a" style="left:1.5px;top:2.3px;width:43px;height:46.9px;background:#ab343b;border-radius:3.5px"></div><div class="a" style="left:3.2px;top:4px;width:39.6px;height:43.5px;background:#fdfdfd;border-radius:2.2px"></div><div class="a" style="left:9.0px;top:9.0px;width:20.0px;height:1.4px;background:#b8373c;opacity:0.8"></div><div class="a" style="left:9.0px;top:12.5px;width:18.0px;height:1.0px;background:#e46a6e;opacity:1"></div><div class="a" style="left:8.0px;top:17.0px;width:34.0px;height:0.8px;background:#d3dde2;opacity:1"></div><div class="a" style="left:9.0px;top:20.0px;width:22.0px;height:0.9px;background:#555;opacity:0.5"></div><div class="a" style="left:10.0px;top:22.4px;width:20.0px;height:0.9px;background:#555;opacity:0.5"></div><div class="a" style="left:9.0px;top:24.8px;width:18.0px;height:0.9px;background:#555;opacity:0.5"></div><div class="a" style="left:10.0px;top:27.2px;width:22.0px;height:0.9px;background:#555;opacity:0.5"></div><div class="a" style="left:9.0px;top:29.6px;width:20.0px;height:0.9px;background:#555;opacity:0.5"></div><div class="a" style="left:6.0px;top:34.0px;width:34.0px;height:0.8px;background:#d3dde2;opacity:1"></div><div class="a" style="left:6.0px;top:39.0px;width:34.0px;height:0.8px;background:#d3dde2;opacity:1"></div></div></div>
<div class="a clip" style="left:225px;top:0;width:45px;height:69px;overflow:hidden"><div class="a" style="left:0;top:0;width:45px;height:18px;overflow:hidden;box-shadow:inset -1px 0 0 rgba(60,70,20,.15)"><svg style="left:9px;top:5px" width="12" height="10" viewBox="0 0 12 10"><rect x="0.65" y="0.65" width="10.7" height="8.7" rx="1.1" fill="none" stroke="#fff" stroke-width="1.3"/><circle cx="3.1" cy="3.1" r="0.85" fill="#fff"/><path d="M3.6 7.2 L5.4 5.2 L7.4 6.2 L10 3.6" fill="none" stroke="#fff" stroke-width="1.15" stroke-linecap="round" stroke-linejoin="round"/></svg><div class="t cn" style="left:31.6px;top:3.5px;font-size:12.5px;letter-spacing:-0.5px;color:#f4f4f4">6.png</div></div><div class="a" style="left:0;top:18px;width:45px;height:51px;overflow:hidden"><div class="a" style="left:5.5px;top:3px;width:60px;height:44px;background:linear-gradient(180deg,#e8e9e9,#f0f0f0);border-radius:1px;box-shadow:0 1px 1px rgba(0,0,0,.35)"></div><div class="a" style="left:5.5px;top:3px;width:60px;height:44px;background:repeating-linear-gradient(180deg,transparent 0,transparent 4.5px,#d3dde2 4.5px,#d3dde2 5.2px);opacity:.7"></div><div class="a" style="left:11.0px;top:3px;width:0.8px;height:44px;background:#ecaeb0"></div><div class="a" style="left:3.0px;top:5.5px;width:5px;height:39.0px;background:repeating-linear-gradient(180deg,#404040 0,#404040 1.15px,transparent 1.15px,transparent 4.69px)"></div><div class="a" style="left:12px;top:2px;width:11px;height:3px;background:#f4a49c"></div><div class="a" style="left:19.0px;top:14.5px;width:24.0px;height:1.0px;background:#c9494e;opacity:0.6"></div><div class="a" style="left:20.0px;top:17.6px;width:21.0px;height:1.0px;background:#c9494e;opacity:0.6"></div><div class="a" style="left:19.0px;top:20.7px;width:18.0px;height:1.0px;background:#c9494e;opacity:0.6"></div><div class="a" style="left:20.0px;top:23.8px;width:24.0px;height:1.0px;background:#c9494e;opacity:0.6"></div><div class="a" style="left:19.0px;top:26.9px;width:21.0px;height:1.0px;background:#c9494e;opacity:0.6"></div><div class="a" style="left:20.0px;top:30.0px;width:18.0px;height:1.0px;background:#c9494e;opacity:0.6"></div><div class="a" style="left:19.0px;top:33.1px;width:24.0px;height:1.0px;background:#c9494e;opacity:0.6"></div></div></div>
<div class="a clip" style="left:270px;top:0;width:45px;height:69px;overflow:hidden"><div class="a" style="left:0;top:0;width:45px;height:18px;overflow:hidden;box-shadow:inset -1px 0 0 rgba(60,70,20,.15)"><svg style="left:9px;top:5px" width="12" height="10" viewBox="0 0 12 10"><rect x="0.65" y="0.65" width="10.7" height="8.7" rx="1.1" fill="none" stroke="#fff" stroke-width="1.3"/><circle cx="3.1" cy="3.1" r="0.85" fill="#fff"/><path d="M3.6 7.2 L5.4 5.2 L7.4 6.2 L10 3.6" fill="none" stroke="#fff" stroke-width="1.15" stroke-linecap="round" stroke-linejoin="round"/></svg><div class="t cn" style="left:31.6px;top:3.5px;font-size:12.5px;letter-spacing:-0.5px;color:#f4f4f4">7.png</div></div><div class="a" style="left:0;top:18px;width:45px;height:51px;overflow:hidden"><div class="a" style="left:1.5px;top:2.5px;width:43px;height:46.5px;background:#e26a70"></div><div class="a" style="left:3.1px;top:4.1px;width:39.8px;height:43.3px;background:#f6f3f1"></div><div class="a" style="left:41px;top:5.5px;width:1.6px;height:41px;background:repeating-linear-gradient(180deg,#d89a78 0,#d89a78 1.3px,transparent 1.3px,transparent 2.5px)"></div><div class="a" style="left:9.0px;top:8.5px;width:22.0px;height:1.4px;background:#b8373c;opacity:0.8"></div><div class="a" style="left:9.0px;top:11.5px;width:15.0px;height:1.4px;background:#b8373c;opacity:0.8"></div><div class="a" style="left:9px;top:19px;width:19px;height:15px;background:radial-gradient(ellipse at 62% 50%,#2e3444 0,#4a4450 22%,#c8b4a0 50%,#ece4da 100%);border:1px solid #fff;transform:rotate(-8deg);box-shadow:0 0 1px rgba(0,0,0,.4)"></div><div class="a" style="left:28px;top:26px;width:8px;height:13px;border:1.4px solid #f2b92c;border-left:none;border-bottom:none;border-radius:0 9px 0 0"></div><div class="a" style="left:16.0px;top:40.0px;width:22.0px;height:0.8px;background:#cf5a5e;opacity:0.7"></div></div></div>
<div class="a clip" style="left:315px;top:0;width:45px;height:69px;overflow:hidden"><div class="a" style="left:0;top:0;width:45px;height:18px;overflow:hidden;box-shadow:inset -1px 0 0 rgba(60,70,20,.15)"><svg style="left:9px;top:5px" width="12" height="10" viewBox="0 0 12 10"><rect x="0.65" y="0.65" width="10.7" height="8.7" rx="1.1" fill="none" stroke="#fff" stroke-width="1.3"/><circle cx="3.1" cy="3.1" r="0.85" fill="#fff"/><path d="M3.6 7.2 L5.4 5.2 L7.4 6.2 L10 3.6" fill="none" stroke="#fff" stroke-width="1.15" stroke-linecap="round" stroke-linejoin="round"/></svg><div class="t cn" style="left:31.6px;top:3.5px;font-size:12.5px;letter-spacing:-0.5px;color:#f4f4f4">8.png</div></div><div class="a" style="left:0;top:18px;width:45px;height:51px;overflow:hidden"><div class="a" style="left:1.5px;top:2.5px;width:43px;height:46.5px;background:#e26a70"></div><div class="a" style="left:3.1px;top:4.1px;width:39.8px;height:43.3px;background:#f6f3f1"></div><div class="a" style="left:41px;top:5.5px;width:1.6px;height:41px;background:repeating-linear-gradient(180deg,#d89a78 0,#d89a78 1.3px,transparent 1.3px,transparent 2.5px)"></div><div class="a" style="left:9.0px;top:8.5px;width:18.0px;height:1.4px;background:#b8373c;opacity:0.8"></div><div class="a" style="left:9.0px;top:11.5px;width:14.0px;height:1.4px;background:#b8373c;opacity:0.8"></div><div class="a" style="left:20.0px;top:22.0px;width:12.0px;height:1.0px;background:#b8373c;opacity:1"></div><div class="a" style="left:9.0px;top:25.0px;width:26.0px;height:0.8px;background:#999;opacity:0.5"></div><div class="a" style="left:22.0px;top:27.5px;width:11.0px;height:0.8px;background:#999;opacity:0.6"></div><div class="a" style="left:32.0px;top:23.0px;width:3.0px;height:3.0px;background:#555;opacity:0.8"></div><div class="a" style="left:20.0px;top:36.0px;width:12.0px;height:1.0px;background:#b8373c;opacity:1"></div><div class="a" style="left:13.0px;top:39.0px;width:22.0px;height:0.8px;background:#999;opacity:0.5"></div><div class="a" style="left:15.0px;top:41.5px;width:18.0px;height:0.8px;background:#999;opacity:0.6"></div><div class="a" style="left:32.0px;top:37.0px;width:3.0px;height:3.0px;background:#555;opacity:0.8"></div></div></div>
<div class="a clip" style="left:360px;top:0;width:45px;height:69px;overflow:hidden"><div class="a" style="left:0;top:0;width:45px;height:18px;overflow:hidden;box-shadow:inset -1px 0 0 rgba(60,70,20,.15)"><svg style="left:9px;top:5px" width="12" height="10" viewBox="0 0 12 10"><rect x="0.65" y="0.65" width="10.7" height="8.7" rx="1.1" fill="none" stroke="#fff" stroke-width="1.3"/><circle cx="3.1" cy="3.1" r="0.85" fill="#fff"/><path d="M3.6 7.2 L5.4 5.2 L7.4 6.2 L10 3.6" fill="none" stroke="#fff" stroke-width="1.15" stroke-linecap="round" stroke-linejoin="round"/></svg><div class="t cn" style="left:31.6px;top:3.5px;font-size:12.5px;letter-spacing:-0.5px;color:#f4f4f4">9.png</div></div><div class="a" style="left:0;top:18px;width:45px;height:51px;overflow:hidden"><div class="a" style="left:1.5px;top:2.3px;width:43px;height:46.9px;background:#ab343b;border-radius:3.5px"></div><div class="a" style="left:3.2px;top:4px;width:39.6px;height:43.5px;background:#fdfdfd;border-radius:2.2px"></div><div class="a" style="left:9.0px;top:8.5px;width:20.0px;height:1.4px;background:#b8373c;opacity:0.8"></div><div class="a" style="left:9.0px;top:11.5px;width:16.0px;height:1.4px;background:#b8373c;opacity:0.8"></div><div class="a" style="left:6.0px;top:16.0px;width:34.0px;height:0.8px;background:#d3dde2;opacity:1"></div><div class="a" style="left:6.0px;top:37.0px;width:34.0px;height:0.8px;background:#d3dde2;opacity:1"></div><div class="a" style="left:16px;top:23px;width:17px;height:16px;background:#f4bf2a;transform:rotate(6deg)"></div><div class="a" style="left:13px;top:21px;width:10px;height:3px;background:#d8d8d0;transform:rotate(-14deg)"></div></div></div>
<div class="a clip" style="left:405px;top:0;width:45px;height:69px;overflow:hidden"><div class="a" style="left:0;top:0;width:45px;height:18px;overflow:hidden;box-shadow:inset -1px 0 0 rgba(60,70,20,.15)"><svg style="left:9px;top:5px" width="12" height="10" viewBox="0 0 12 10"><rect x="0.65" y="0.65" width="10.7" height="8.7" rx="1.1" fill="none" stroke="#fff" stroke-width="1.3"/><circle cx="3.1" cy="3.1" r="0.85" fill="#fff"/><path d="M3.6 7.2 L5.4 5.2 L7.4 6.2 L10 3.6" fill="none" stroke="#fff" stroke-width="1.15" stroke-linecap="round" stroke-linejoin="round"/></svg><div class="t cn" style="left:31.6px;top:3.5px;font-size:12.5px;letter-spacing:-0.5px;color:#f4f4f4">10.png</div></div><div class="a" style="left:0;top:18px;width:45px;height:51px;overflow:hidden"><div class="a" style="left:2.5px;top:3px;width:60px;height:44px;background:linear-gradient(180deg,#e8e9e9,#f0f0f0);border-radius:1px;box-shadow:0 1px 1px rgba(0,0,0,.35)"></div><div class="a" style="left:2.5px;top:3px;width:60px;height:44px;background:repeating-linear-gradient(180deg,transparent 0,transparent 4.5px,#d3dde2 4.5px,#d3dde2 5.2px);opacity:.7"></div><div class="a" style="left:-5.0px;top:3px;width:0.8px;height:44px;background:#ecaeb0"></div><div class="a" style="left:0.0px;top:5.5px;width:5px;height:39.0px;background:repeating-linear-gradient(180deg,#404040 0,#404040 1.15px,transparent 1.15px,transparent 4.69px)"></div><div class="a" style="left:17px;top:13px;width:11px;height:11px;border:1.2px solid #c9cfc9;border-radius:50%;box-sizing:border-box"></div><div class="a" style="left:18px;top:14px;width:4px;height:4px;background:#8cc878;border-radius:50%"></div><div class="a" style="left:40px;top:13px;width:10px;height:10px;background:#f6c52c;border-radius:50%"></div><div class="a" style="left:19.0px;top:29.0px;width:7.0px;height:1.0px;background:#c9494e;opacity:1"></div><div class="a" style="left:14.0px;top:33.0px;width:18.0px;height:0.8px;background:#999;opacity:0.6"></div><div class="a" style="left:14.0px;top:35.5px;width:16.0px;height:0.8px;background:#999;opacity:0.6"></div><div class="a" style="left:40.0px;top:29.0px;width:4.0px;height:1.0px;background:#c9494e;opacity:1"></div><div class="a" style="left:38.0px;top:33.0px;width:7.0px;height:0.8px;background:#999;opacity:0.6"></div></div></div>
<div class="a clip" style="left:450px;top:0;width:45px;height:69px;overflow:hidden"><div class="a" style="left:0;top:0;width:45px;height:18px;overflow:hidden;box-shadow:inset -1px 0 0 rgba(60,70,20,.15)"><svg style="left:9px;top:5px" width="12" height="10" viewBox="0 0 12 10"><rect x="0.65" y="0.65" width="10.7" height="8.7" rx="1.1" fill="none" stroke="#fff" stroke-width="1.3"/><circle cx="3.1" cy="3.1" r="0.85" fill="#fff"/><path d="M3.6 7.2 L5.4 5.2 L7.4 6.2 L10 3.6" fill="none" stroke="#fff" stroke-width="1.15" stroke-linecap="round" stroke-linejoin="round"/></svg><div class="t cn" style="left:31.6px;top:3.5px;font-size:12.5px;letter-spacing:-0.5px;color:#f4f4f4">11.png</div></div><div class="a" style="left:0;top:18px;width:45px;height:51px;overflow:hidden"><div class="a" style="left:1.5px;top:2.3px;width:43px;height:46.9px;background:#ab343b;border-radius:3.5px"></div><div class="a" style="left:3.2px;top:4px;width:39.6px;height:43.5px;background:#fdfdfd;border-radius:2.2px"></div><div class="a" style="left:9.0px;top:8.5px;width:18.0px;height:1.4px;background:#b8373c;opacity:0.8"></div><div class="a" style="left:9.0px;top:11.5px;width:20.0px;height:1.4px;background:#b8373c;opacity:0.8"></div><div class="a" style="left:9.0px;top:14.5px;width:14.0px;height:1.6px;background:#b8373c;opacity:1"></div><div class="a" style="left:22px;top:20px;width:17px;height:13px;background:linear-gradient(100deg,#2a3348 0,#5a6a8a 35%,#c9a890 55%,#28303e 100%);border:1px solid #fff;transform:rotate(5deg)"></div><div class="a" style="left:10px;top:27px;width:17px;height:16px;background:#f4bf2a;transform:rotate(-5deg)"></div><div class="a" style="left:7px;top:26px;width:9px;height:3px;background:#d0d0c8;transform:rotate(-18deg)"></div></div></div>
<div class="a clip" style="left:495px;top:0;width:45px;height:69px;overflow:hidden"><div class="a" style="left:0;top:0;width:45px;height:18px;overflow:hidden;box-shadow:inset -1px 0 0 rgba(60,70,20,.15)"><svg style="left:9px;top:5px" width="12" height="10" viewBox="0 0 12 10"><rect x="0.65" y="0.65" width="10.7" height="8.7" rx="1.1" fill="none" stroke="#fff" stroke-width="1.3"/><circle cx="3.1" cy="3.1" r="0.85" fill="#fff"/><path d="M3.6 7.2 L5.4 5.2 L7.4 6.2 L10 3.6" fill="none" stroke="#fff" stroke-width="1.15" stroke-linecap="round" stroke-linejoin="round"/></svg><div class="t cn" style="left:31.6px;top:3.5px;font-size:12.5px;letter-spacing:-0.5px;color:#f4f4f4">12.png</div></div><div class="a" style="left:0;top:18px;width:45px;height:51px;overflow:hidden"><div class="a" style="left:1.5px;top:2.3px;width:43px;height:46.9px;background:#ab343b;border-radius:3.5px"></div><div class="a" style="left:3.2px;top:4px;width:39.6px;height:43.5px;background:#fdfdfd;border-radius:2.2px"></div><div class="a" style="left:9.0px;top:8.5px;width:16.0px;height:1.4px;background:#b8373c;opacity:0.8"></div><div class="a" style="left:9.0px;top:11.5px;width:19.0px;height:1.4px;background:#b8373c;opacity:0.8"></div><div class="a" style="left:14px;top:19px;width:5px;height:6px;background:#e2686c"></div><div class="a" style="left:14px;top:25px;width:5px;height:3px;background:#f2b92c"></div><div class="a" style="left:14px;top:28px;width:5px;height:5.5px;background:#a5d58c"></div><div class="a" style="left:22.5px;top:19px;width:5px;height:3px;background:#e2686c"></div><div class="a" style="left:22.5px;top:22px;width:5px;height:6px;background:#f2b92c"></div><div class="a" style="left:22.5px;top:28px;width:5px;height:5.5px;background:#a5d58c"></div><div class="a" style="left:31px;top:19px;width:5px;height:4.5px;background:#e2686c"></div><div class="a" style="left:31px;top:23.5px;width:5px;height:3px;background:#f2b92c"></div><div class="a" style="left:31px;top:26.5px;width:5px;height:7px;background:#a5d58c"></div><div class="a" style="left:8.0px;top:30.5px;width:30.0px;height:0.7px;background:#888;opacity:1"></div><div class="a" style="left:9.0px;top:39.5px;width:5.0px;height:1.0px;background:#a5d58c;opacity:1"></div><div class="a" style="left:18.0px;top:39.5px;width:5.0px;height:1.0px;background:#f2b92c;opacity:1"></div><div class="a" style="left:28.0px;top:39.5px;width:5.0px;height:1.0px;background:#e2686c;opacity:1"></div><div class="a" style="left:42.5px;top:14px;width:3px;height:6px;border:1.2px solid #f2b92c;border-right:none;border-radius:4px 0 0 4px"></div></div></div>
<div class="a clip" style="left:540px;top:0;width:45px;height:69px;overflow:hidden"><div class="a" style="left:0;top:0;width:45px;height:18px;overflow:hidden;box-shadow:inset -1px 0 0 rgba(60,70,20,.15)"><svg style="left:9px;top:5px" width="12" height="10" viewBox="0 0 12 10"><rect x="0.65" y="0.65" width="10.7" height="8.7" rx="1.1" fill="none" stroke="#fff" stroke-width="1.3"/><circle cx="3.1" cy="3.1" r="0.85" fill="#fff"/><path d="M3.6 7.2 L5.4 5.2 L7.4 6.2 L10 3.6" fill="none" stroke="#fff" stroke-width="1.15" stroke-linecap="round" stroke-linejoin="round"/></svg><div class="t cn" style="left:31.6px;top:3.5px;font-size:12.5px;letter-spacing:-0.5px;color:#f4f4f4">13.png</div></div><div class="a" style="left:0;top:18px;width:45px;height:51px;overflow:hidden"><div class="a" style="left:22px;top:5px;width:30px;height:41px;background:linear-gradient(180deg,#e2e4e4,#ececec);box-shadow:0 1px 1px rgba(0,0,0,.3)"></div><div class="a" style="left:22px;top:5px;width:30px;height:41px;background:repeating-linear-gradient(180deg,transparent 0,transparent 4.5px,#d3dde2 4.5px,#d3dde2 5.2px);opacity:.7"></div><div class="a" style="left:19.5px;top:7.0px;width:5px;height:37.5px;background:repeating-linear-gradient(180deg,#404040 0,#404040 1.15px,transparent 1.15px,transparent 4.50px)"></div><div class="a" style="left:27.5px;top:5px;width:0.8px;height:41px;background:#e39a9c"></div><div class="a" style="left:27px;top:6px;width:8px;height:1.3px;background:#f2b92c;transform-origin:0 0;transform:rotate(48deg)"></div><div class="a" style="left:30px;top:11px;width:5px;height:5px;background:#f2b92c;clip-path:polygon(100% 0,100% 100%,0 100%)"></div><div class="t" style="left:36px;top:20px;font-family:'Liberation Serif',serif;font-size:8px;color:#444">31</div><div class="a" style="left:36.0px;top:27.5px;width:12.0px;height:1.6px;background:#e2686c;opacity:1"></div><div class="a" style="left:38.0px;top:33.0px;width:8.0px;height:0.8px;background:#999;opacity:0.7"></div><div class="a" style="left:38.0px;top:35.5px;width:8.0px;height:0.8px;background:#999;opacity:0.7"></div></div></div>
<div class="a clip" style="left:585px;top:0;width:45px;height:69px;overflow:hidden"><div class="a" style="left:0;top:0;width:45px;height:18px;overflow:hidden;box-shadow:inset -1px 0 0 rgba(60,70,20,.15)"><svg style="left:9px;top:5px" width="12" height="10" viewBox="0 0 12 10"><rect x="0.65" y="0.65" width="10.7" height="8.7" rx="1.1" fill="none" stroke="#fff" stroke-width="1.3"/><circle cx="3.1" cy="3.1" r="0.85" fill="#fff"/><path d="M3.6 7.2 L5.4 5.2 L7.4 6.2 L10 3.6" fill="none" stroke="#fff" stroke-width="1.15" stroke-linecap="round" stroke-linejoin="round"/></svg><div class="t cn" style="left:31.6px;top:3.5px;font-size:12.5px;letter-spacing:-0.5px;color:#f4f4f4">14.png</div></div><div class="a" style="left:0;top:18px;width:45px;height:51px;overflow:hidden"><div class="a" style="left:1.5px;top:2.5px;width:43px;height:46.5px;background:#e26a70"></div><div class="a" style="left:3.1px;top:4.1px;width:39.8px;height:43.3px;background:#f6f3f1"></div><div class="a" style="left:41px;top:5.5px;width:1.6px;height:41px;background:repeating-linear-gradient(180deg,#d89a78 0,#d89a78 1.3px,transparent 1.3px,transparent 2.5px)"></div><div class="a" style="left:13px;top:7px;width:17px;height:17px;border-radius:50%;background:radial-gradient(circle at 60% 35%,#7a2030 0,#3a2a3a 35%,#c9b8b0 60%,#e8e4e0 100%)"></div><div class="a" style="left:17.0px;top:29.5px;width:9.0px;height:1.0px;background:#cf5a5e;opacity:1"></div><div class="a" style="left:10.0px;top:33.5px;width:22.0px;height:0.8px;background:#999;opacity:0.6"></div><div class="a" style="left:13.0px;top:36.0px;width:17.0px;height:0.8px;background:#999;opacity:0.6"></div><div class="a" style="left:15.0px;top:38.5px;width:13.0px;height:0.8px;background:#999;opacity:0.6"></div></div></div>
<div class="a clip" style="left:630px;top:0;width:45px;height:69px;overflow:hidden"><div class="a" style="left:0;top:0;width:45px;height:18px;overflow:hidden;box-shadow:inset -1px 0 0 rgba(60,70,20,.15)"><svg style="left:9px;top:5px" width="12" height="10" viewBox="0 0 12 10"><rect x="0.65" y="0.65" width="10.7" height="8.7" rx="1.1" fill="none" stroke="#fff" stroke-width="1.3"/><circle cx="3.1" cy="3.1" r="0.85" fill="#fff"/><path d="M3.6 7.2 L5.4 5.2 L7.4 6.2 L10 3.6" fill="none" stroke="#fff" stroke-width="1.15" stroke-linecap="round" stroke-linejoin="round"/></svg><div class="t cn" style="left:31.6px;top:3.5px;font-size:12.5px;letter-spacing:-0.5px;color:#f4f4f4">15.png</div></div><div class="a" style="left:0;top:18px;width:45px;height:51px;overflow:hidden"><div class="a" style="left:5.5px;top:3px;width:60px;height:44px;background:linear-gradient(180deg,#e8e9e9,#f0f0f0);border-radius:1px;box-shadow:0 1px 1px rgba(0,0,0,.35)"></div><div class="a" style="left:5.5px;top:3px;width:60px;height:44px;background:repeating-linear-gradient(180deg,transparent 0,transparent 4.5px,#d3dde2 4.5px,#d3dde2 5.2px);opacity:.7"></div><div class="a" style="left:11.0px;top:3px;width:0.8px;height:44px;background:#ecaeb0"></div><div class="a" style="left:3.0px;top:5.5px;width:5px;height:39.0px;background:repeating-linear-gradient(180deg,#404040 0,#404040 1.15px,transparent 1.15px,transparent 4.69px)"></div><div class="a" style="left:38.0px;top:9.0px;width:8.0px;height:1.6px;background:#b8373c;opacity:1"></div><div class="a" style="left:33.0px;top:15.5px;width:12.0px;height:0.8px;background:#999;opacity:0.6"></div><div class="a" style="left:16px;top:24px;width:11px;height:6px;border:1.3px solid #d0494c;border-radius:50%;box-sizing:border-box"></div><div class="a" style="left:33px;top:24px;width:11px;height:6px;border:1.3px solid #d0494c;border-radius:50%;box-sizing:border-box"></div><div class="a" style="left:20.0px;top:32.0px;width:3.0px;height:1.5px;background:#8cc878;opacity:1"></div><div class="a" style="left:16.0px;top:35.5px;width:11.0px;height:0.8px;background:#999;opacity:0.6"></div><div class="a" style="left:17.0px;top:38.0px;width:9.0px;height:0.8px;background:#999;opacity:0.6"></div><div class="a" style="left:38.0px;top:19.5px;width:2.0px;height:1.5px;background:#8cc878;opacity:1"></div></div></div>
<div class="a clip" style="left:675px;top:0;width:45px;height:69px;overflow:hidden"><div class="a" style="left:0;top:0;width:45px;height:18px;overflow:hidden;box-shadow:inset -1px 0 0 rgba(60,70,20,.15)"><svg style="left:9px;top:5px" width="12" height="10" viewBox="0 0 12 10"><rect x="0.65" y="0.65" width="10.7" height="8.7" rx="1.1" fill="none" stroke="#fff" stroke-width="1.3"/><circle cx="3.1" cy="3.1" r="0.85" fill="#fff"/><path d="M3.6 7.2 L5.4 5.2 L7.4 6.2 L10 3.6" fill="none" stroke="#fff" stroke-width="1.15" stroke-linecap="round" stroke-linejoin="round"/></svg><div class="t cn" style="left:31.6px;top:3.5px;font-size:12.5px;letter-spacing:-0.5px;color:#f4f4f4">16.png</div></div><div class="a" style="left:0;top:18px;width:45px;height:51px;overflow:hidden"><div class="a" style="left:1.5px;top:2.5px;width:43px;height:46.5px;background:#e26a70"></div><div class="a" style="left:3.1px;top:4.1px;width:39.8px;height:43.3px;background:#f6f3f1"></div><div class="a" style="left:41px;top:5.5px;width:1.6px;height:41px;background:repeating-linear-gradient(180deg,#d89a78 0,#d89a78 1.3px,transparent 1.3px,transparent 2.5px)"></div><div class="a" style="left:9.0px;top:8.5px;width:20.0px;height:1.4px;background:#b8373c;opacity:0.8"></div><div class="a" style="left:9.0px;top:11.5px;width:19.0px;height:1.4px;background:#b8373c;opacity:0.8"></div><div class="a" style="left:9.0px;top:14.5px;width:21.0px;height:1.6px;background:#b8373c;opacity:1"></div><div class="a" style="left:9.0px;top:22.5px;width:18.0px;height:0.9px;background:#888;opacity:0.6"></div><div class="a" style="left:10.0px;top:25.0px;width:16.0px;height:0.9px;background:#888;opacity:0.6"></div><div class="a" style="left:9.0px;top:27.5px;width:14.0px;height:0.9px;background:#888;opacity:0.6"></div><div class="a" style="left:10.0px;top:30.0px;width:18.0px;height:0.9px;background:#888;opacity:0.6"></div><div class="a" style="left:2.5px;top:39px;width:13px;height:4px;background:linear-gradient(90deg,#f9a098,#f0776e)"></div></div></div>
<div class="a clip" style="left:720px;top:0;width:45px;height:69px;overflow:hidden"><div class="a" style="left:0;top:0;width:45px;height:18px;overflow:hidden;box-shadow:inset -1px 0 0 rgba(60,70,20,.15)"><svg style="left:9px;top:5px" width="12" height="10" viewBox="0 0 12 10"><rect x="0.65" y="0.65" width="10.7" height="8.7" rx="1.1" fill="none" stroke="#fff" stroke-width="1.3"/><circle cx="3.1" cy="3.1" r="0.85" fill="#fff"/><path d="M3.6 7.2 L5.4 5.2 L7.4 6.2 L10 3.6" fill="none" stroke="#fff" stroke-width="1.15" stroke-linecap="round" stroke-linejoin="round"/></svg><div class="t cn" style="left:31.6px;top:3.5px;font-size:12.5px;letter-spacing:-0.5px;color:#f4f4f4">17.png</div></div><div class="a" style="left:0;top:18px;width:45px;height:51px;overflow:hidden"><div class="a" style="left:1.5px;top:2.3px;width:43px;height:46.9px;background:#ab343b;border-radius:3.5px"></div><div class="a" style="left:3.2px;top:4px;width:39.6px;height:43.5px;background:#fdfdfd;border-radius:2.2px"></div><div class="a" style="left:9.0px;top:8.5px;width:14.0px;height:1.4px;background:#b8373c;opacity:0.8"></div><div class="a" style="left:9.0px;top:11.5px;width:13.0px;height:1.4px;background:#b8373c;opacity:0.8"></div><div class="a" style="left:6.0px;top:16.0px;width:34.0px;height:0.8px;background:#d3dde2;opacity:1"></div><div class="a" style="left:18px;top:22px;width:10px;height:6px;border:1.2px solid #f2b92c;border-radius:50%;box-sizing:border-box"></div><div class="a" style="left:35.0px;top:24.5px;width:8.0px;height:1.0px;background:#e2686c;opacity:1"></div><div class="a" style="left:14.0px;top:30.0px;width:3.0px;height:1.0px;background:#333;opacity:1"></div><div class="a" style="left:31.0px;top:30.0px;width:1.0px;height:2.0px;background:#333;opacity:1"></div><div class="a" style="left:9.0px;top:34.0px;width:12.0px;height:0.8px;background:#999;opacity:0.6"></div><div class="a" style="left:27.0px;top:34.0px;width:12.0px;height:0.8px;background:#999;opacity:0.6"></div><div class="a" style="left:10.0px;top:36.5px;width:8.0px;height:0.8px;background:#999;opacity:0.6"></div></div></div>
<div class="a clip" style="left:765px;top:0;width:45px;height:69px;overflow:hidden"><div class="a" style="left:0;top:0;width:45px;height:18px;overflow:hidden;box-shadow:inset -1px 0 0 rgba(60,70,20,.15)"><svg style="left:9px;top:5px" width="12" height="10" viewBox="0 0 12 10"><rect x="0.65" y="0.65" width="10.7" height="8.7" rx="1.1" fill="none" stroke="#fff" stroke-width="1.3"/><circle cx="3.1" cy="3.1" r="0.85" fill="#fff"/><path d="M3.6 7.2 L5.4 5.2 L7.4 6.2 L10 3.6" fill="none" stroke="#fff" stroke-width="1.15" stroke-linecap="round" stroke-linejoin="round"/></svg><div class="t cn" style="left:31.6px;top:3.5px;font-size:12.5px;letter-spacing:-0.5px;color:#f4f4f4">18.png</div></div><div class="a" style="left:0;top:18px;width:45px;height:51px;overflow:hidden"><div class="a" style="left:5.5px;top:3px;width:60px;height:44px;background:linear-gradient(180deg,#e8e9e9,#f0f0f0);border-radius:1px;box-shadow:0 1px 1px rgba(0,0,0,.35)"></div><div class="a" style="left:5.5px;top:3px;width:60px;height:44px;background:repeating-linear-gradient(180deg,transparent 0,transparent 4.5px,#d3dde2 4.5px,#d3dde2 5.2px);opacity:.7"></div><div class="a" style="left:11.0px;top:3px;width:0.8px;height:44px;background:#ecaeb0"></div><div class="a" style="left:3.0px;top:5.5px;width:5px;height:39.0px;background:repeating-linear-gradient(180deg,#404040 0,#404040 1.15px,transparent 1.15px,transparent 4.69px)"></div><div class="a" style="left:38.0px;top:9.0px;width:8.0px;height:1.6px;background:#b8373c;opacity:1"></div><div class="a" style="left:15px;top:19px;width:12px;height:10px;background:#9fd68c;border-radius:40% 50% 30% 60%"></div><div class="a" style="left:18px;top:29px;width:6px;height:12px;background:#9fd68c;border-radius:30% 40% 60% 50%"></div><div class="a" style="left:29px;top:20px;width:16px;height:9px;background:#9fd68c;border-radius:50% 30% 40% 50%"></div><div class="a" style="left:31px;top:28px;width:8px;height:11px;background:#9fd68c;border-radius:40% 40% 60% 60%"></div><div class="a" style="left:17px;top:24px;width:2px;height:2px;background:#d0494c"></div><div class="a" style="left:27px;top:22px;width:2px;height:2px;background:#d0494c"></div><div class="a" style="left:34px;top:30px;width:3px;height:2px;background:#333"></div><div class="a" style="left:41px;top:35px;width:2px;height:2px;background:#d0494c"></div><div class="a" style="left:25px;top:26px;width:3px;height:2px;background:#333"></div></div></div>
<div class="a clip" style="left:810px;top:0;width:45px;height:69px;overflow:hidden"><div class="a" style="left:0;top:0;width:45px;height:18px;overflow:hidden;box-shadow:inset -1px 0 0 rgba(60,70,20,.15)"><svg style="left:9px;top:5px" width="12" height="10" viewBox="0 0 12 10"><rect x="0.65" y="0.65" width="10.7" height="8.7" rx="1.1" fill="none" stroke="#fff" stroke-width="1.3"/><circle cx="3.1" cy="3.1" r="0.85" fill="#fff"/><path d="M3.6 7.2 L5.4 5.2 L7.4 6.2 L10 3.6" fill="none" stroke="#fff" stroke-width="1.15" stroke-linecap="round" stroke-linejoin="round"/></svg><div class="t cn" style="left:31.6px;top:3.5px;font-size:12.5px;letter-spacing:-0.5px;color:#f4f4f4">19.png</div></div><div class="a" style="left:0;top:18px;width:45px;height:51px;overflow:hidden"><svg style="left:0;top:0" width="45" height="51" viewBox="0 0 45 51"><defs><linearGradient id="dr" x1="0" y1="0" x2="0" y2="1"><stop offset="0" stop-color="#a8692e"/><stop offset="0.25" stop-color="#8e5422"/><stop offset="0.3" stop-color="#b87a38"/><stop offset="1" stop-color="#9a6028"/></linearGradient><pattern id="pl" width="4" height="4" patternUnits="userSpaceOnUse"><rect width="4" height="4" fill="#4a4f86"/><rect width="2" height="2" fill="#c8485a"/><rect x="2" y="2" width="2" height="2" fill="#e8e0e4"/></pattern></defs><rect width="45" height="51" fill="#b4b2ac"/><rect x="0" y="0" width="20" height="34" fill="url(#dr)"/><rect x="19" y="0" width="9" height="30" fill="#e6e8ea"/><rect x="27" y="0" width="18" height="30" fill="#8a8478"/><path d="M28 0 H45 V11 Q40 14 35 10 Q30 9 28 4 Z" fill="#3a4a30"/><rect x="35" y="13" width="10" height="8" fill="#c26c48"/><rect x="0" y="30" width="45" height="21" fill="#a8a8a4"/><rect x="33" y="38" width="12" height="13" fill="#6a6a68"/><path d="M35 22 Q40 20 45 22 V51 H37 Q39 40 35 30 Z" fill="url(#pl)"/><path d="M30 24 L41 13 L44 17 L34 29 Z" fill="#e6b8a0"/><path d="M37 10 Q38 3 44 2 L45 14 L40 17 Z" fill="#efc8b4"/><path d="M9 8 Q16 4 20 9 L21 16 L18 24 L12 26 L6 44 Q3 47 2 44 Q1 30 4 18 Q5 10 9 8 Z" fill="#4e382c"/><path d="M13 12 Q18 9 21 12 L23 17 L21.5 19 L21 22 L16 24 L13 20 Z" fill="#e8b8a2"/><path d="M6 30 Q8 25 14 24 L22 27 Q30 30 33 42 L32 51 H8 Q6 42 6 30 Z" fill="#f3f3f5"/><path d="M15 29 L28 12 L32 15 L22 33 Z" fill="#ecc0aa"/><path d="M26 6 Q28 3 31 5 L33 11 L29 15 L26 12 Z" fill="#f0c8b4"/><path d="M27.5 13.5 L32.5 16.5" stroke="#8a2838" stroke-width="1.2"/><rect x="0" y="48" width="8" height="3" fill="#3868a8"/></svg></div></div>
<div class="a clip" style="left:855px;top:0;width:45px;height:69px;overflow:hidden"><div class="a" style="left:0;top:0;width:45px;height:18px;overflow:hidden;box-shadow:inset -1px 0 0 rgba(60,70,20,.15)"><svg style="left:9px;top:5px" width="12" height="10" viewBox="0 0 12 10"><rect x="0.65" y="0.65" width="10.7" height="8.7" rx="1.1" fill="none" stroke="#fff" stroke-width="1.3"/><circle cx="3.1" cy="3.1" r="0.85" fill="#fff"/><path d="M3.6 7.2 L5.4 5.2 L7.4 6.2 L10 3.6" fill="none" stroke="#fff" stroke-width="1.15" stroke-linecap="round" stroke-linejoin="round"/></svg><div class="t cn" style="left:31.6px;top:3.5px;font-size:12.5px;letter-spacing:-0.5px;color:#f4f4f4">20.png</div></div><div class="a" style="left:0;top:18px;width:45px;height:51px;overflow:hidden"><div class="a" style="left:1.5px;top:2.5px;width:43px;height:46.5px;background:#e26a70"></div><div class="a" style="left:3.1px;top:4.1px;width:39.8px;height:43.3px;background:#f6f3f1"></div><div class="a" style="left:41px;top:5.5px;width:1.6px;height:41px;background:repeating-linear-gradient(180deg,#d89a78 0,#d89a78 1.3px,transparent 1.3px,transparent 2.5px)"></div><div class="a" style="left:9.0px;top:9.0px;width:19.0px;height:1.4px;background:#b8373c;opacity:0.8"></div><div class="a" style="left:9px;top:20px;width:28px;height:7px;background:#f4bc2c"></div><div class="a" style="left:27.5px;top:20.0px;width:0.7px;height:26.0px;background:#bbb;opacity:1"></div><div class="a" style="left:9.0px;top:32.5px;width:28.0px;height:0.7px;background:#ddd;opacity:1"></div><div class="a" style="left:9.0px;top:39.5px;width:28.0px;height:0.7px;background:#ddd;opacity:1"></div><div class="a" style="left:13.0px;top:30.0px;width:8.0px;height:0.8px;background:#888;opacity:0.6"></div><div class="a" style="left:13.0px;top:37.0px;width:8.0px;height:0.8px;background:#888;opacity:0.6"></div></div></div>
<div class="a clip" style="left:900px;top:0;width:45px;height:69px;overflow:hidden"><div class="a" style="left:0;top:0;width:45px;height:18px;overflow:hidden;box-shadow:inset -1px 0 0 rgba(60,70,20,.15)"><svg style="left:9px;top:5px" width="12" height="10" viewBox="0 0 12 10"><rect x="0.65" y="0.65" width="10.7" height="8.7" rx="1.1" fill="none" stroke="#fff" stroke-width="1.3"/><circle cx="3.1" cy="3.1" r="0.85" fill="#fff"/><path d="M3.6 7.2 L5.4 5.2 L7.4 6.2 L10 3.6" fill="none" stroke="#fff" stroke-width="1.15" stroke-linecap="round" stroke-linejoin="round"/></svg><div class="t cn" style="left:31.6px;top:3.5px;font-size:12.5px;letter-spacing:-0.5px;color:#f4f4f4">21.png</div></div><div class="a" style="left:0;top:18px;width:45px;height:51px;overflow:hidden"><div class="a" style="left:5.5px;top:3px;width:60px;height:44px;background:linear-gradient(180deg,#e8e9e9,#f0f0f0);border-radius:1px;box-shadow:0 1px 1px rgba(0,0,0,.35)"></div><div class="a" style="left:5.5px;top:3px;width:60px;height:44px;background:repeating-linear-gradient(180deg,transparent 0,transparent 4.5px,#d3dde2 4.5px,#d3dde2 5.2px);opacity:.7"></div><div class="a" style="left:11.0px;top:3px;width:0.8px;height:44px;background:#ecaeb0"></div><div class="a" style="left:3.0px;top:5.5px;width:5px;height:39.0px;background:repeating-linear-gradient(180deg,#404040 0,#404040 1.15px,transparent 1.15px,transparent 4.69px)"></div><div class="a" style="left:13px;top:1px;width:5px;height:14px;background:linear-gradient(180deg,#fad23c,#f4b818)"></div><div class="a" style="left:29.0px;top:9.0px;width:16.0px;height:1.6px;background:#b8373c;opacity:1"></div><div class="a" style="left:22.0px;top:20.0px;width:8.0px;height:0.9px;background:#c9494e;opacity:1"></div><div class="a" style="left:20.0px;top:23.0px;width:12.0px;height:0.8px;background:#888;opacity:0.6"></div><div class="a" style="left:20.0px;top:25.5px;width:10.0px;height:0.8px;background:#888;opacity:0.6"></div><div class="a" style="left:42.0px;top:23.0px;width:3.0px;height:1.0px;background:#555;opacity:0.7"></div><div class="a" style="left:22.0px;top:34.0px;width:8.0px;height:0.9px;background:#c9494e;opacity:1"></div><div class="a" style="left:20.0px;top:37.0px;width:12.0px;height:0.8px;background:#888;opacity:0.6"></div><div class="a" style="left:20.0px;top:39.5px;width:10.0px;height:0.8px;background:#888;opacity:0.6"></div><div class="a" style="left:42.0px;top:37.0px;width:3.0px;height:1.0px;background:#555;opacity:0.7"></div></div></div>
<div class="a clip" style="left:945px;top:0;width:45px;height:69px;overflow:hidden"><div class="a" style="left:0;top:0;width:45px;height:18px;overflow:hidden;box-shadow:inset -1px 0 0 rgba(60,70,20,.15)"><svg style="left:9px;top:5px" width="12" height="10" viewBox="0 0 12 10"><rect x="0.65" y="0.65" width="10.7" height="8.7" rx="1.1" fill="none" stroke="#fff" stroke-width="1.3"/><circle cx="3.1" cy="3.1" r="0.85" fill="#fff"/><path d="M3.6 7.2 L5.4 5.2 L7.4 6.2 L10 3.6" fill="none" stroke="#fff" stroke-width="1.15" stroke-linecap="round" stroke-linejoin="round"/></svg><div class="t cn" style="left:31.6px;top:3.5px;font-size:12.5px;letter-spacing:-0.5px;color:#f4f4f4">22.png</div></div><div class="a" style="left:0;top:18px;width:45px;height:51px;overflow:hidden"><div class="a" style="left:1.5px;top:2.5px;width:43px;height:46.5px;background:#e26a70"></div><div class="a" style="left:3.1px;top:4.1px;width:39.8px;height:43.3px;background:#f6f3f1"></div><div class="a" style="left:41px;top:5.5px;width:1.6px;height:41px;background:repeating-linear-gradient(180deg,#d89a78 0,#d89a78 1.3px,transparent 1.3px,transparent 2.5px)"></div><div class="a" style="left:9.0px;top:9.0px;width:13.0px;height:1.4px;background:#b8373c;opacity:0.8"></div><div class="a" style="left:10px;top:20px;width:21px;height:22px;background:#eeefa8;transform:rotate(-7deg);box-shadow:0 0 1px rgba(0,0,0,.3)"></div><div class="a" style="left:15px;top:17.5px;width:10px;height:3px;background:#d8dccc;transform:rotate(-7deg)"></div><div class="a" style="left:15.0px;top:28.0px;width:12.0px;height:0.8px;background:#8a8a6a;opacity:0.7"></div><div class="a" style="left:16.5px;top:30.6px;width:10.0px;height:0.8px;background:#8a8a6a;opacity:0.7"></div><div class="a" style="left:15.0px;top:33.2px;width:8.0px;height:0.8px;background:#8a8a6a;opacity:0.7"></div><div class="a" style="left:16.5px;top:35.8px;width:12.0px;height:0.8px;background:#8a8a6a;opacity:0.7"></div><div class="a" style="left:15.0px;top:38.4px;width:10.0px;height:0.8px;background:#8a8a6a;opacity:0.7"></div></div></div>
<div class="a clip" style="left:990px;top:0;width:45px;height:69px;overflow:hidden"><div class="a" style="left:0;top:0;width:45px;height:18px;overflow:hidden;box-shadow:inset -1px 0 0 rgba(60,70,20,.15)"><svg style="left:9px;top:5px" width="12" height="10" viewBox="0 0 12 10"><rect x="0.65" y="0.65" width="10.7" height="8.7" rx="1.1" fill="none" stroke="#fff" stroke-width="1.3"/><circle cx="3.1" cy="3.1" r="0.85" fill="#fff"/><path d="M3.6 7.2 L5.4 5.2 L7.4 6.2 L10 3.6" fill="none" stroke="#fff" stroke-width="1.15" stroke-linecap="round" stroke-linejoin="round"/></svg><div class="t cn" style="left:31.6px;top:3.5px;font-size:12.5px;letter-spacing:-0.5px;color:#f4f4f4">23.png</div></div><div class="a" style="left:0;top:18px;width:45px;height:51px;overflow:hidden"><div class="a" style="left:5.5px;top:3px;width:60px;height:44px;background:linear-gradient(180deg,#e8e9e9,#f0f0f0);border-radius:1px;box-shadow:0 1px 1px rgba(0,0,0,.35)"></div><div class="a" style="left:5.5px;top:3px;width:60px;height:44px;background:repeating-linear-gradient(180deg,transparent 0,transparent 4.5px,#d3dde2 4.5px,#d3dde2 5.2px);opacity:.7"></div><div class="a" style="left:11.0px;top:3px;width:0.8px;height:44px;background:#ecaeb0"></div><div class="a" style="left:3.0px;top:5.5px;width:5px;height:39.0px;background:repeating-linear-gradient(180deg,#404040 0,#404040 1.15px,transparent 1.15px,transparent 4.69px)"></div><div class="a" style="left:38.0px;top:9.0px;width:8.0px;height:1.6px;background:#b8373c;opacity:1"></div><div class="a" style="left:31px;top:20px;width:18px;height:21px;background:#eeefa8;transform:rotate(-5deg);box-shadow:0 0 1px rgba(0,0,0,.3)"></div><div class="a" style="left:38px;top:17px;width:7px;height:3px;background:#d8dccc"></div><div class="a" style="left:35.0px;top:27.0px;width:8.0px;height:0.8px;background:#8a8a6a;opacity:0.6"></div><div class="a" style="left:36.0px;top:29.6px;width:8.0px;height:0.8px;background:#8a8a6a;opacity:0.6"></div><div class="a" style="left:35.0px;top:32.2px;width:8.0px;height:0.8px;background:#8a8a6a;opacity:0.6"></div><div class="a" style="left:36.0px;top:34.8px;width:8.0px;height:0.8px;background:#8a8a6a;opacity:0.6"></div></div></div>
<div class="a clip" style="left:1035px;top:0;width:45px;height:69px;overflow:hidden"><div class="a" style="left:0;top:0;width:45px;height:18px;overflow:hidden;box-shadow:inset -1px 0 0 rgba(60,70,20,.15)"><svg style="left:9px;top:5px" width="12" height="10" viewBox="0 0 12 10"><rect x="0.65" y="0.65" width="10.7" height="8.7" rx="1.1" fill="none" stroke="#fff" stroke-width="1.3"/><circle cx="3.1" cy="3.1" r="0.85" fill="#fff"/><path d="M3.6 7.2 L5.4 5.2 L7.4 6.2 L10 3.6" fill="none" stroke="#fff" stroke-width="1.15" stroke-linecap="round" stroke-linejoin="round"/></svg><div class="t cn" style="left:31.6px;top:3.5px;font-size:12.5px;letter-spacing:-0.5px;color:#f4f4f4">24.png</div></div><div class="a" style="left:0;top:18px;width:45px;height:51px;overflow:hidden"><div class="a" style="left:1.5px;top:2.3px;width:43px;height:46.9px;background:#ab343b;border-radius:3.5px"></div><div class="a" style="left:3.2px;top:4px;width:39.6px;height:43.5px;background:#fdfdfd;border-radius:2.2px"></div><div class="t" style="left:12px;top:9px;font-size:6.2px;color:#b8373c;font-weight:bold;letter-spacing:-0.1px">Thanks!</div><div class="a" style="left:7.0px;top:16.0px;width:32.0px;height:0.8px;background:#d3dde2;opacity:1"></div><div class="a" style="left:11.0px;top:19.5px;width:20.0px;height:0.8px;background:#777;opacity:0.7"></div><div class="a" style="left:11.0px;top:22.5px;width:13.0px;height:0.8px;background:#777;opacity:0.7"></div><div class="a" style="left:11.0px;top:26.0px;width:10.0px;height:0.8px;background:#777;opacity:0.7"></div><div class="a" style="left:6.0px;top:34.0px;width:34.0px;height:0.8px;background:#d3dde2;opacity:1"></div><div class="a" style="left:6.0px;top:38.5px;width:34.0px;height:0.8px;background:#d3dde2;opacity:1"></div><div class="a" style="left:41.5px;top:30px;width:3px;height:9px;background:#eeefa8"></div></div></div>
<div class="a" style="left:1080px;top:18px;width:5px;height:51px"><div class="a" style="left:1.5px;top:2.5px;width:10px;height:46.5px;background:#f6f3f1;border:1.2px solid #e26a70;box-sizing:border-box"></div></div>
</div>
<div class="a" style="left:372.4px;top:565px;width:45.6px;height:18px;background:rgba(150,170,100,.28)"></div>
<div class="a" style="left:372.4px;top:564.8px;width:45.6px;height:1.4px;background:#fff;border-radius:2px 2px 0 0"></div>
<div class="a" style="left:372.4px;top:633px;width:45.6px;height:2px;background:#fff;border-radius:0 0 2px 2px"></div>
<div class="a" style="left:372.4px;top:565px;width:4.6px;height:70px;background:#fff;border-radius:2px 0 0 2px"></div><div class="a" style="left:374.2px;top:594px;width:1.1px;height:12.5px;background:#1c1c1c"></div>
<div class="a" style="left:100.7px;top:462px;width:1.5px;height:218px;background:#f5b82e"></div>
<svg style="left:101px;top:462px" width="6" height="5" viewBox="0 0 6 5"><path d="M0 0 H6 L1 5 H0 Z" fill="#f5b82e"/></svg>
<div class="a" style="left:246.1px;top:218px;width:5.6px;height:326px;background:#e6202b;border-radius:2.8px 2.8px 0 0"></div>
<svg style="left:238px;top:540px" width="23" height="25" viewBox="0 0 23 25"><path d="M0.2 0 H22.8 L11.5 24.8 Z" fill="#e6202b"/></svg>
</div>
<div id="frame"></div>
</body></html>
